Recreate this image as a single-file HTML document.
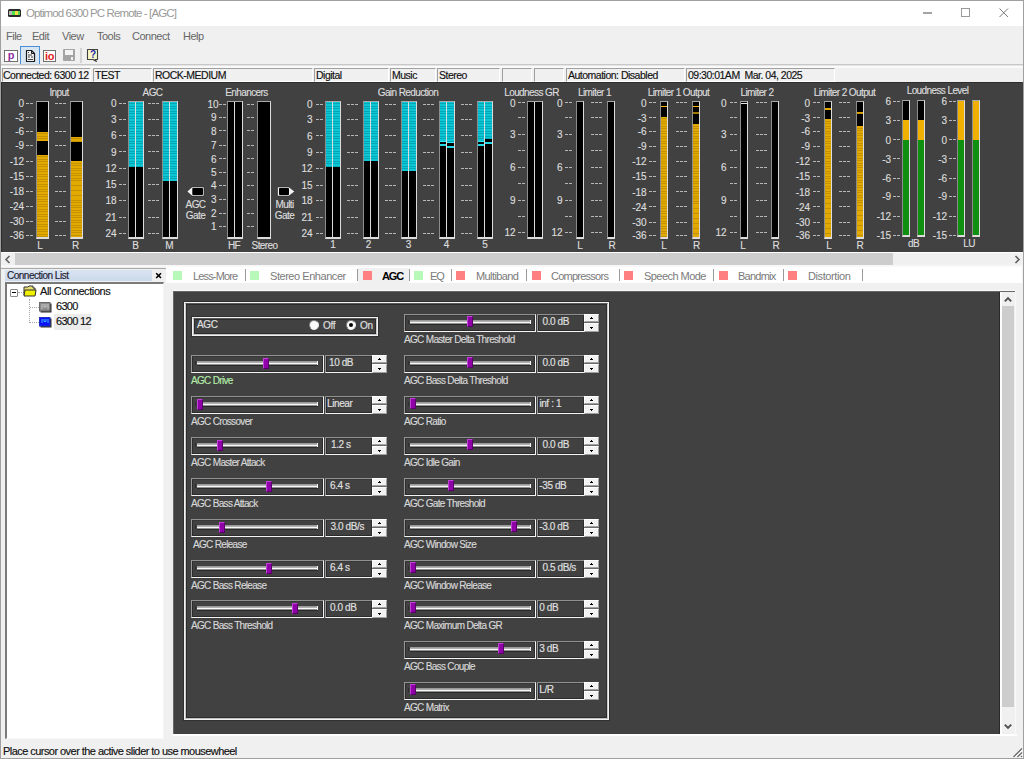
<!DOCTYPE html>
<html><head><meta charset="utf-8"><title>Optimod 6300 PC Remote - [AGC]</title>
<style>
html,body{margin:0;padding:0;width:1024px;height:759px;overflow:hidden;background:#f0f0f0}
body{position:relative;font-family:"Liberation Sans",sans-serif}
body>div,body>svg{position:absolute}
.t{white-space:pre}
.s{-webkit-text-stroke:0.15px currentColor}
</style></head><body>
<div style="left:0px;top:0px;width:1024px;height:759px;background:#f0f0f0"></div>
<div style="left:0px;top:0px;width:1024px;height:26px;background:#ffffff"></div>
<div style="left:8px;top:9px;width:13px;height:8px;background:#2a2a2a;border-radius:1.5px"></div>
<div style="left:9px;top:11px;width:3px;height:4px;background:#b8b8b8"></div>
<div style="left:12px;top:11px;width:3px;height:4px;background:#50e050"></div>
<div style="left:15px;top:11px;width:3px;height:4px;background:#f0e040"></div>
<div style="left:18px;top:11px;width:2px;height:4px;background:#50d050"></div>
<div class="t" style="left:26px;top:6.0px;height:14px;line-height:14px;font-size:11.5px;color:#999999;letter-spacing:-0.88px;font-weight:normal;">Optimod 6300 PC Remote - [AGC]</div>
<div style="left:923px;top:12px;width:9px;height:2px;background:#a4a4a4"></div>
<div style="left:961px;top:8px;width:9px;height:9px;border:1px solid #9a9a9a;box-sizing:border-box"></div>
<svg style="position:absolute;left:999px;top:8px" width="10" height="10"><path d="M0.5 0.5 L9 9 M9 0.5 L0.5 9" stroke="#7a7a7a" stroke-width="1"/></svg>
<div class="t" style="left:6px;top:29.0px;height:14px;line-height:14px;font-size:11px;color:#666666;letter-spacing:-0.5px;font-weight:normal;">File</div>
<div class="t" style="left:32px;top:29.0px;height:14px;line-height:14px;font-size:11px;color:#666666;letter-spacing:-0.5px;font-weight:normal;">Edit</div>
<div class="t" style="left:62px;top:29.0px;height:14px;line-height:14px;font-size:11px;color:#666666;letter-spacing:-0.5px;font-weight:normal;">View</div>
<div class="t" style="left:97px;top:29.0px;height:14px;line-height:14px;font-size:11px;color:#666666;letter-spacing:-0.5px;font-weight:normal;">Tools</div>
<div class="t" style="left:132px;top:29.0px;height:14px;line-height:14px;font-size:11px;color:#666666;letter-spacing:-0.5px;font-weight:normal;">Connect</div>
<div class="t" style="left:183px;top:29.0px;height:14px;line-height:14px;font-size:11px;color:#666666;letter-spacing:-0.5px;font-weight:normal;">Help</div>
<div style="left:4px;top:50px;width:14px;height:12px;background:#fff;border:1px solid #707070;box-sizing:border-box"></div>
<div class="t" style="left:-139px;width:300px;text-align:center;top:47.5px;height:14px;line-height:14px;font-size:11px;color:#9030a0;letter-spacing:0px;font-weight:bold;">p</div>
<div style="left:20px;top:46px;width:20px;height:19px;background:#d8e6f2;border:1px solid #4a90d8;box-sizing:border-box"></div>
<svg style="position:absolute;left:25px;top:49px" width="11" height="14"><path d="M1.5 1.5 H6.5 L9.5 4.5 V12.5 H1.5 Z" fill="#f4f4f4" stroke="#1a1a1a" stroke-width="1.2" stroke-linejoin="round"/><path d="M6.5 1.5 V4.5 H9.5" fill="none" stroke="#1a1a1a" stroke-width="1"/><path d="M3 3.5 H4 M3 6 H7 M3 8 H5 M6 8 H8 M3 10.5 H8" stroke="#303030" stroke-width="0.9"/></svg>
<div style="left:43px;top:50px;width:13px;height:12px;background:#fff;border:1px solid #707070;box-sizing:border-box"></div>
<div class="t" style="left:-100.5px;width:300px;text-align:center;top:49.0px;height:14px;line-height:14px;font-size:11px;color:#e02020;letter-spacing:-0.5px;font-weight:bold;">io</div>
<div style="left:63px;top:49px;width:12px;height:12px;background:#a4a4a4;border-radius:1px"></div>
<div style="left:65px;top:50px;width:8px;height:5px;background:#f4f4f4"></div>
<div style="left:71px;top:57px;width:2px;height:3px;background:#f0f0f0"></div>
<div style="left:80px;top:48px;width:2px;height:15px;background:#d4d4d4"></div>
<svg style="position:absolute;left:86px;top:48px" width="14" height="15"><path d="M1.5 1.5 H11.5 V11.5 H9 L10.5 13.5 L7 11.5 H1.5 Z" fill="#f8f8c8" stroke="#404040" stroke-width="1.1" stroke-linejoin="round"/></svg>
<div class="t" style="left:-57px;width:300px;text-align:center;top:48.0px;height:14px;line-height:14px;font-size:10px;color:#2828b0;letter-spacing:0px;font-weight:bold;">?</div>
<div style="left:1px;top:64px;width:1022px;height:1px;background:#c8c8c8"></div>
<div style="left:1px;top:65px;width:1022px;height:1px;background:#e4e4e4"></div>
<div style="left:1px;top:66px;width:1022px;height:2px;background:#fafafa"></div>
<div style="left:2px;top:68px;width:89px;height:14px;border-left:1px solid #a0a0a0;border-top:1px solid #a0a0a0;border-right:1px solid #ffffff;border-bottom:1px solid #ffffff;box-sizing:border-box"></div>
<div class="t s" style="left:3px;top:68.0px;height:14px;line-height:14px;font-size:10.5px;color:#101010;letter-spacing:-0.5px;font-weight:normal;">Connected: 6300 12</div>
<div style="left:93px;top:68px;width:59px;height:14px;border-left:1px solid #a0a0a0;border-top:1px solid #a0a0a0;border-right:1px solid #ffffff;border-bottom:1px solid #ffffff;box-sizing:border-box"></div>
<div class="t s" style="left:95px;top:68.0px;height:14px;line-height:14px;font-size:10.5px;color:#101010;letter-spacing:-0.5px;font-weight:normal;">TEST</div>
<div style="left:153px;top:68px;width:160px;height:14px;border-left:1px solid #a0a0a0;border-top:1px solid #a0a0a0;border-right:1px solid #ffffff;border-bottom:1px solid #ffffff;box-sizing:border-box"></div>
<div class="t s" style="left:155px;top:68.0px;height:14px;line-height:14px;font-size:10.5px;color:#101010;letter-spacing:-0.5px;font-weight:normal;">ROCK-MEDIUM</div>
<div style="left:314px;top:68px;width:75px;height:14px;border-left:1px solid #a0a0a0;border-top:1px solid #a0a0a0;border-right:1px solid #ffffff;border-bottom:1px solid #ffffff;box-sizing:border-box"></div>
<div class="t s" style="left:316px;top:68.0px;height:14px;line-height:14px;font-size:10.5px;color:#101010;letter-spacing:-0.5px;font-weight:normal;">Digital</div>
<div style="left:390px;top:68px;width:46px;height:14px;border-left:1px solid #a0a0a0;border-top:1px solid #a0a0a0;border-right:1px solid #ffffff;border-bottom:1px solid #ffffff;box-sizing:border-box"></div>
<div class="t s" style="left:392px;top:68.0px;height:14px;line-height:14px;font-size:10.5px;color:#101010;letter-spacing:-0.5px;font-weight:normal;">Music</div>
<div style="left:437px;top:68px;width:63px;height:14px;border-left:1px solid #a0a0a0;border-top:1px solid #a0a0a0;border-right:1px solid #ffffff;border-bottom:1px solid #ffffff;box-sizing:border-box"></div>
<div class="t s" style="left:439px;top:68.0px;height:14px;line-height:14px;font-size:10.5px;color:#101010;letter-spacing:-0.5px;font-weight:normal;">Stereo</div>
<div style="left:502px;top:68px;width:30px;height:14px;border-left:1px solid #a0a0a0;border-top:1px solid #a0a0a0;border-right:1px solid #ffffff;border-bottom:1px solid #ffffff;box-sizing:border-box"></div>
<div style="left:534px;top:68px;width:30px;height:14px;border-left:1px solid #a0a0a0;border-top:1px solid #a0a0a0;border-right:1px solid #ffffff;border-bottom:1px solid #ffffff;box-sizing:border-box"></div>
<div style="left:566px;top:68px;width:119px;height:14px;border-left:1px solid #a0a0a0;border-top:1px solid #a0a0a0;border-right:1px solid #ffffff;border-bottom:1px solid #ffffff;box-sizing:border-box"></div>
<div class="t s" style="left:568px;top:68.0px;height:14px;line-height:14px;font-size:10.5px;color:#101010;letter-spacing:-0.5px;font-weight:normal;">Automation: Disabled</div>
<div style="left:686px;top:68px;width:149px;height:14px;border-left:1px solid #a0a0a0;border-top:1px solid #a0a0a0;border-right:1px solid #ffffff;border-bottom:1px solid #ffffff;box-sizing:border-box"></div>
<div class="t s" style="left:688px;top:68.0px;height:14px;line-height:14px;font-size:10.5px;color:#101010;letter-spacing:-0.5px;font-weight:normal;">09:30:01AM  Mar. 04, 2025</div>
<div style="left:1px;top:82px;width:1022px;height:170px;background:#414141"></div>
<div style="left:1px;top:252px;width:1022px;height:1px;background:#ffffff"></div>
<div style="left:1px;top:82px;width:1021px;height:1px;background:#2e2e2e"></div>
<div style="left:1px;top:82px;width:1px;height:170px;background:#2e2e2e"></div>
<div class="t s" style="left:-91px;width:300px;text-align:center;top:85.5px;height:14px;line-height:14px;font-size:10px;color:#dcdcdc;letter-spacing:-0.6px;font-weight:normal;">Input</div>
<div class="t s" style="left:-276px;width:300px;text-align:right;top:96.7px;height:14px;line-height:14px;font-size:10px;color:#dcdcdc;letter-spacing:-0.1px;font-weight:normal;">0</div>
<div style="left:26px;top:103px;width:3px;height:1px;background:#b4b8bc"></div>
<div style="left:30px;top:103px;width:3px;height:1px;background:#b4b8bc"></div>
<div class="t s" style="left:-276px;width:300px;text-align:right;top:110.7px;height:14px;line-height:14px;font-size:10px;color:#dcdcdc;letter-spacing:-0.1px;font-weight:normal;">-3</div>
<div style="left:26px;top:117px;width:3px;height:1px;background:#b4b8bc"></div>
<div style="left:30px;top:117px;width:3px;height:1px;background:#b4b8bc"></div>
<div class="t s" style="left:-276px;width:300px;text-align:right;top:125.19999999999999px;height:14px;line-height:14px;font-size:10px;color:#dcdcdc;letter-spacing:-0.1px;font-weight:normal;">-6</div>
<div style="left:26px;top:131px;width:3px;height:1px;background:#b4b8bc"></div>
<div style="left:30px;top:131px;width:3px;height:1px;background:#b4b8bc"></div>
<div class="t s" style="left:-276px;width:300px;text-align:right;top:138.7px;height:14px;line-height:14px;font-size:10px;color:#dcdcdc;letter-spacing:-0.1px;font-weight:normal;">-9</div>
<div style="left:26px;top:145px;width:3px;height:1px;background:#b4b8bc"></div>
<div style="left:30px;top:145px;width:3px;height:1px;background:#b4b8bc"></div>
<div class="t s" style="left:-276px;width:300px;text-align:right;top:154.7px;height:14px;line-height:14px;font-size:10px;color:#dcdcdc;letter-spacing:-0.1px;font-weight:normal;">-12</div>
<div style="left:26px;top:161px;width:3px;height:1px;background:#b4b8bc"></div>
<div style="left:30px;top:161px;width:3px;height:1px;background:#b4b8bc"></div>
<div class="t s" style="left:-276px;width:300px;text-align:right;top:169.7px;height:14px;line-height:14px;font-size:10px;color:#dcdcdc;letter-spacing:-0.1px;font-weight:normal;">-15</div>
<div style="left:26px;top:176px;width:3px;height:1px;background:#b4b8bc"></div>
<div style="left:30px;top:176px;width:3px;height:1px;background:#b4b8bc"></div>
<div class="t s" style="left:-276px;width:300px;text-align:right;top:185.2px;height:14px;line-height:14px;font-size:10px;color:#dcdcdc;letter-spacing:-0.1px;font-weight:normal;">-18</div>
<div style="left:26px;top:191px;width:3px;height:1px;background:#b4b8bc"></div>
<div style="left:30px;top:191px;width:3px;height:1px;background:#b4b8bc"></div>
<div class="t s" style="left:-276px;width:300px;text-align:right;top:200.2px;height:14px;line-height:14px;font-size:10px;color:#dcdcdc;letter-spacing:-0.1px;font-weight:normal;">-24</div>
<div style="left:26px;top:206px;width:3px;height:1px;background:#b4b8bc"></div>
<div style="left:30px;top:206px;width:3px;height:1px;background:#b4b8bc"></div>
<div class="t s" style="left:-276px;width:300px;text-align:right;top:215.2px;height:14px;line-height:14px;font-size:10px;color:#dcdcdc;letter-spacing:-0.1px;font-weight:normal;">-30</div>
<div style="left:26px;top:221px;width:3px;height:1px;background:#b4b8bc"></div>
<div style="left:30px;top:221px;width:3px;height:1px;background:#b4b8bc"></div>
<div class="t s" style="left:-276px;width:300px;text-align:right;top:229.2px;height:14px;line-height:14px;font-size:10px;color:#dcdcdc;letter-spacing:-0.1px;font-weight:normal;">-36</div>
<div style="left:26px;top:235px;width:3px;height:1px;background:#b4b8bc"></div>
<div style="left:30px;top:235px;width:3px;height:1px;background:#b4b8bc"></div>
<div style="left:55px;top:103px;width:3px;height:1px;background:#b4b8bc"></div>
<div style="left:59px;top:103px;width:3px;height:1px;background:#b4b8bc"></div>
<div style="left:63px;top:103px;width:3px;height:1px;background:#b4b8bc"></div>
<div style="left:55px;top:117px;width:3px;height:1px;background:#b4b8bc"></div>
<div style="left:59px;top:117px;width:3px;height:1px;background:#b4b8bc"></div>
<div style="left:63px;top:117px;width:3px;height:1px;background:#b4b8bc"></div>
<div style="left:55px;top:131px;width:3px;height:1px;background:#b4b8bc"></div>
<div style="left:59px;top:131px;width:3px;height:1px;background:#b4b8bc"></div>
<div style="left:63px;top:131px;width:3px;height:1px;background:#b4b8bc"></div>
<div style="left:55px;top:145px;width:3px;height:1px;background:#b4b8bc"></div>
<div style="left:59px;top:145px;width:3px;height:1px;background:#b4b8bc"></div>
<div style="left:63px;top:145px;width:3px;height:1px;background:#b4b8bc"></div>
<div style="left:55px;top:161px;width:3px;height:1px;background:#b4b8bc"></div>
<div style="left:59px;top:161px;width:3px;height:1px;background:#b4b8bc"></div>
<div style="left:63px;top:161px;width:3px;height:1px;background:#b4b8bc"></div>
<div style="left:55px;top:176px;width:3px;height:1px;background:#b4b8bc"></div>
<div style="left:59px;top:176px;width:3px;height:1px;background:#b4b8bc"></div>
<div style="left:63px;top:176px;width:3px;height:1px;background:#b4b8bc"></div>
<div style="left:55px;top:191px;width:3px;height:1px;background:#b4b8bc"></div>
<div style="left:59px;top:191px;width:3px;height:1px;background:#b4b8bc"></div>
<div style="left:63px;top:191px;width:3px;height:1px;background:#b4b8bc"></div>
<div style="left:55px;top:206px;width:3px;height:1px;background:#b4b8bc"></div>
<div style="left:59px;top:206px;width:3px;height:1px;background:#b4b8bc"></div>
<div style="left:63px;top:206px;width:3px;height:1px;background:#b4b8bc"></div>
<div style="left:55px;top:221px;width:3px;height:1px;background:#b4b8bc"></div>
<div style="left:59px;top:221px;width:3px;height:1px;background:#b4b8bc"></div>
<div style="left:63px;top:221px;width:3px;height:1px;background:#b4b8bc"></div>
<div style="left:55px;top:235px;width:3px;height:1px;background:#b4b8bc"></div>
<div style="left:59px;top:235px;width:3px;height:1px;background:#b4b8bc"></div>
<div style="left:63px;top:235px;width:3px;height:1px;background:#b4b8bc"></div>
<div style="left:36px;top:101px;width:13px;height:138px;background:#000;border-left:1px solid #8c8c8c;border-top:1px solid #a8a8a8;border-right:1px solid #dcdcdc;border-bottom:2px solid #dcdcdc;box-sizing:border-box"></div>
<div style="left:37px;top:132px;width:11px;height:9px;background:repeating-linear-gradient(#e2aa00 0 1.5px,#c49200 1.5px 2.5px)"></div>
<div style="left:37px;top:155px;width:11px;height:82px;background:repeating-linear-gradient(#e2aa00 0 1.5px,#c49200 1.5px 2.5px)"></div>
<div style="left:70px;top:101px;width:13px;height:138px;background:#000;border-left:1px solid #8c8c8c;border-top:1px solid #a8a8a8;border-right:1px solid #dcdcdc;border-bottom:2px solid #dcdcdc;box-sizing:border-box"></div>
<div style="left:71px;top:137px;width:11px;height:5px;background:repeating-linear-gradient(#e2aa00 0 1.5px,#c49200 1.5px 2.5px)"></div>
<div style="left:71px;top:161px;width:11px;height:76px;background:repeating-linear-gradient(#e2aa00 0 1.5px,#c49200 1.5px 2.5px)"></div>
<div class="t s" style="left:-110px;width:300px;text-align:center;top:239.0px;height:14px;line-height:14px;font-size:10px;color:#dcdcdc;letter-spacing:0px;font-weight:normal;">L</div>
<div class="t s" style="left:-74.5px;width:300px;text-align:center;top:239.0px;height:14px;line-height:14px;font-size:10px;color:#dcdcdc;letter-spacing:0px;font-weight:normal;">R</div>
<div class="t s" style="left:2.5px;width:300px;text-align:center;top:85.5px;height:14px;line-height:14px;font-size:10px;color:#dcdcdc;letter-spacing:-0.6px;font-weight:normal;">AGC</div>
<div class="t s" style="left:-183.5px;width:300px;text-align:right;top:97.0px;height:14px;line-height:14px;font-size:10px;color:#dcdcdc;letter-spacing:-0.1px;font-weight:normal;">0</div>
<div style="left:119px;top:103px;width:3px;height:1px;background:#b4b8bc"></div>
<div style="left:123px;top:103px;width:3px;height:1px;background:#b4b8bc"></div>
<div class="t s" style="left:-183.5px;width:300px;text-align:right;top:113.10000000000001px;height:14px;line-height:14px;font-size:10px;color:#dcdcdc;letter-spacing:-0.1px;font-weight:normal;">3</div>
<div style="left:119px;top:119px;width:3px;height:1px;background:#b4b8bc"></div>
<div style="left:123px;top:119px;width:3px;height:1px;background:#b4b8bc"></div>
<div class="t s" style="left:-183.5px;width:300px;text-align:right;top:129.0px;height:14px;line-height:14px;font-size:10px;color:#dcdcdc;letter-spacing:-0.1px;font-weight:normal;">6</div>
<div style="left:119px;top:135px;width:3px;height:1px;background:#b4b8bc"></div>
<div style="left:123px;top:135px;width:3px;height:1px;background:#b4b8bc"></div>
<div class="t s" style="left:-183.5px;width:300px;text-align:right;top:145.6px;height:14px;line-height:14px;font-size:10px;color:#dcdcdc;letter-spacing:-0.1px;font-weight:normal;">9</div>
<div style="left:119px;top:151px;width:3px;height:1px;background:#b4b8bc"></div>
<div style="left:123px;top:151px;width:3px;height:1px;background:#b4b8bc"></div>
<div class="t s" style="left:-183.5px;width:300px;text-align:right;top:161.89999999999998px;height:14px;line-height:14px;font-size:10px;color:#dcdcdc;letter-spacing:-0.1px;font-weight:normal;">12</div>
<div style="left:119px;top:168px;width:3px;height:1px;background:#b4b8bc"></div>
<div style="left:123px;top:168px;width:3px;height:1px;background:#b4b8bc"></div>
<div class="t s" style="left:-183.5px;width:300px;text-align:right;top:178.29999999999998px;height:14px;line-height:14px;font-size:10px;color:#dcdcdc;letter-spacing:-0.1px;font-weight:normal;">15</div>
<div style="left:119px;top:184px;width:3px;height:1px;background:#b4b8bc"></div>
<div style="left:123px;top:184px;width:3px;height:1px;background:#b4b8bc"></div>
<div class="t s" style="left:-183.5px;width:300px;text-align:right;top:194.39999999999998px;height:14px;line-height:14px;font-size:10px;color:#dcdcdc;letter-spacing:-0.1px;font-weight:normal;">18</div>
<div style="left:119px;top:200px;width:3px;height:1px;background:#b4b8bc"></div>
<div style="left:123px;top:200px;width:3px;height:1px;background:#b4b8bc"></div>
<div class="t s" style="left:-183.5px;width:300px;text-align:right;top:211.2px;height:14px;line-height:14px;font-size:10px;color:#dcdcdc;letter-spacing:-0.1px;font-weight:normal;">21</div>
<div style="left:119px;top:217px;width:3px;height:1px;background:#b4b8bc"></div>
<div style="left:123px;top:217px;width:3px;height:1px;background:#b4b8bc"></div>
<div class="t s" style="left:-183.5px;width:300px;text-align:right;top:227.29999999999998px;height:14px;line-height:14px;font-size:10px;color:#dcdcdc;letter-spacing:-0.1px;font-weight:normal;">24</div>
<div style="left:119px;top:233px;width:3px;height:1px;background:#b4b8bc"></div>
<div style="left:123px;top:233px;width:3px;height:1px;background:#b4b8bc"></div>
<div style="left:148px;top:103px;width:3px;height:1px;background:#b4b8bc"></div>
<div style="left:152px;top:103px;width:3px;height:1px;background:#b4b8bc"></div>
<div style="left:156px;top:103px;width:3px;height:1px;background:#b4b8bc"></div>
<div style="left:148px;top:119px;width:3px;height:1px;background:#b4b8bc"></div>
<div style="left:152px;top:119px;width:3px;height:1px;background:#b4b8bc"></div>
<div style="left:156px;top:119px;width:3px;height:1px;background:#b4b8bc"></div>
<div style="left:148px;top:135px;width:3px;height:1px;background:#b4b8bc"></div>
<div style="left:152px;top:135px;width:3px;height:1px;background:#b4b8bc"></div>
<div style="left:156px;top:135px;width:3px;height:1px;background:#b4b8bc"></div>
<div style="left:148px;top:151px;width:3px;height:1px;background:#b4b8bc"></div>
<div style="left:152px;top:151px;width:3px;height:1px;background:#b4b8bc"></div>
<div style="left:156px;top:151px;width:3px;height:1px;background:#b4b8bc"></div>
<div style="left:148px;top:168px;width:3px;height:1px;background:#b4b8bc"></div>
<div style="left:152px;top:168px;width:3px;height:1px;background:#b4b8bc"></div>
<div style="left:156px;top:168px;width:3px;height:1px;background:#b4b8bc"></div>
<div style="left:148px;top:184px;width:3px;height:1px;background:#b4b8bc"></div>
<div style="left:152px;top:184px;width:3px;height:1px;background:#b4b8bc"></div>
<div style="left:156px;top:184px;width:3px;height:1px;background:#b4b8bc"></div>
<div style="left:148px;top:200px;width:3px;height:1px;background:#b4b8bc"></div>
<div style="left:152px;top:200px;width:3px;height:1px;background:#b4b8bc"></div>
<div style="left:156px;top:200px;width:3px;height:1px;background:#b4b8bc"></div>
<div style="left:148px;top:217px;width:3px;height:1px;background:#b4b8bc"></div>
<div style="left:152px;top:217px;width:3px;height:1px;background:#b4b8bc"></div>
<div style="left:156px;top:217px;width:3px;height:1px;background:#b4b8bc"></div>
<div style="left:148px;top:233px;width:3px;height:1px;background:#b4b8bc"></div>
<div style="left:152px;top:233px;width:3px;height:1px;background:#b4b8bc"></div>
<div style="left:156px;top:233px;width:3px;height:1px;background:#b4b8bc"></div>
<div style="left:128px;top:101px;width:16px;height:138px;background:#000;border-left:1px solid #8c8c8c;border-top:1px solid #a8a8a8;border-right:1px solid #dcdcdc;border-bottom:2px solid #dcdcdc;box-sizing:border-box"></div>
<div style="left:135px;top:102px;width:1px;height:135px;background:#dcdcdc"></div>
<div style="left:129px;top:102px;width:6px;height:65px;background:repeating-linear-gradient(#0cc8d6 0 1.5px,#02a6b4 1.5px 2.5px)"></div>
<div style="left:136px;top:102px;width:7px;height:65px;background:repeating-linear-gradient(#0cc8d6 0 1.5px,#02a6b4 1.5px 2.5px)"></div>
<div style="left:162px;top:101px;width:16px;height:138px;background:#000;border-left:1px solid #8c8c8c;border-top:1px solid #a8a8a8;border-right:1px solid #dcdcdc;border-bottom:2px solid #dcdcdc;box-sizing:border-box"></div>
<div style="left:169px;top:102px;width:1px;height:135px;background:#dcdcdc"></div>
<div style="left:163px;top:102px;width:6px;height:79px;background:repeating-linear-gradient(#0cc8d6 0 1.5px,#02a6b4 1.5px 2.5px)"></div>
<div style="left:170px;top:102px;width:7px;height:79px;background:repeating-linear-gradient(#0cc8d6 0 1.5px,#02a6b4 1.5px 2.5px)"></div>
<div class="t s" style="left:-14.5px;width:300px;text-align:center;top:239.0px;height:14px;line-height:14px;font-size:10px;color:#dcdcdc;letter-spacing:0px;font-weight:normal;">B</div>
<div class="t s" style="left:19.5px;width:300px;text-align:center;top:239.0px;height:14px;line-height:14px;font-size:10px;color:#dcdcdc;letter-spacing:0px;font-weight:normal;">M</div>
<svg style="position:absolute;left:186px;top:186px" width="20" height="12"><path d="M1 5.5 L6 1 H18 V10 H6 Z" fill="#f4f4f4" stroke="#2a2a2a" stroke-width="0.6"/><rect x="6.3" y="2" width="10.7" height="7" rx="0.8" fill="#000"/></svg>
<div class="t s" style="left:45.5px;width:300px;text-align:center;top:197.8px;height:14px;line-height:14px;font-size:10px;color:#dcdcdc;letter-spacing:-0.6px;font-weight:normal;">AGC</div>
<div class="t s" style="left:45.5px;width:300px;text-align:center;top:208.5px;height:14px;line-height:14px;font-size:10px;color:#dcdcdc;letter-spacing:-0.6px;font-weight:normal;">Gate</div>
<div class="t s" style="left:96.5px;width:300px;text-align:center;top:85.5px;height:14px;line-height:14px;font-size:10px;color:#dcdcdc;letter-spacing:-0.6px;font-weight:normal;">Enhancers</div>
<div style="left:219px;top:104px;width:3px;height:1px;background:#b4b8bc"></div>
<div style="left:223px;top:104px;width:3px;height:1px;background:#b4b8bc"></div>
<div class="t s" style="left:-83.5px;width:300px;text-align:right;top:111.10000000000001px;height:14px;line-height:14px;font-size:10px;color:#dcdcdc;letter-spacing:-0.1px;font-weight:normal;">9</div>
<div style="left:219px;top:117px;width:3px;height:1px;background:#b4b8bc"></div>
<div style="left:223px;top:117px;width:3px;height:1px;background:#b4b8bc"></div>
<div class="t s" style="left:-83.5px;width:300px;text-align:right;top:124.5px;height:14px;line-height:14px;font-size:10px;color:#dcdcdc;letter-spacing:-0.1px;font-weight:normal;">8</div>
<div style="left:219px;top:130px;width:3px;height:1px;background:#b4b8bc"></div>
<div style="left:223px;top:130px;width:3px;height:1px;background:#b4b8bc"></div>
<div class="t s" style="left:-83.5px;width:300px;text-align:right;top:138.89999999999998px;height:14px;line-height:14px;font-size:10px;color:#dcdcdc;letter-spacing:-0.1px;font-weight:normal;">7</div>
<div style="left:219px;top:145px;width:3px;height:1px;background:#b4b8bc"></div>
<div style="left:223px;top:145px;width:3px;height:1px;background:#b4b8bc"></div>
<div class="t s" style="left:-83.5px;width:300px;text-align:right;top:152.5px;height:14px;line-height:14px;font-size:10px;color:#dcdcdc;letter-spacing:-0.1px;font-weight:normal;">6</div>
<div style="left:219px;top:158px;width:3px;height:1px;background:#b4b8bc"></div>
<div style="left:223px;top:158px;width:3px;height:1px;background:#b4b8bc"></div>
<div class="t s" style="left:-83.5px;width:300px;text-align:right;top:166.0px;height:14px;line-height:14px;font-size:10px;color:#dcdcdc;letter-spacing:-0.1px;font-weight:normal;">5</div>
<div style="left:219px;top:172px;width:3px;height:1px;background:#b4b8bc"></div>
<div style="left:223px;top:172px;width:3px;height:1px;background:#b4b8bc"></div>
<div class="t s" style="left:-83.5px;width:300px;text-align:right;top:179.2px;height:14px;line-height:14px;font-size:10px;color:#dcdcdc;letter-spacing:-0.1px;font-weight:normal;">4</div>
<div style="left:219px;top:185px;width:3px;height:1px;background:#b4b8bc"></div>
<div style="left:223px;top:185px;width:3px;height:1px;background:#b4b8bc"></div>
<div class="t s" style="left:-83.5px;width:300px;text-align:right;top:193.29999999999998px;height:14px;line-height:14px;font-size:10px;color:#dcdcdc;letter-spacing:-0.1px;font-weight:normal;">3</div>
<div style="left:219px;top:199px;width:3px;height:1px;background:#b4b8bc"></div>
<div style="left:223px;top:199px;width:3px;height:1px;background:#b4b8bc"></div>
<div class="t s" style="left:-83.5px;width:300px;text-align:right;top:206.7px;height:14px;line-height:14px;font-size:10px;color:#dcdcdc;letter-spacing:-0.1px;font-weight:normal;">2</div>
<div style="left:219px;top:213px;width:3px;height:1px;background:#b4b8bc"></div>
<div style="left:223px;top:213px;width:3px;height:1px;background:#b4b8bc"></div>
<div class="t s" style="left:-83.5px;width:300px;text-align:right;top:220.2px;height:14px;line-height:14px;font-size:10px;color:#dcdcdc;letter-spacing:-0.1px;font-weight:normal;">1</div>
<div style="left:219px;top:226px;width:3px;height:1px;background:#b4b8bc"></div>
<div style="left:223px;top:226px;width:3px;height:1px;background:#b4b8bc"></div>
<div class="t s" style="left:-81.5px;width:300px;text-align:right;top:98.10000000000001px;height:14px;line-height:14px;font-size:10px;color:#dcdcdc;letter-spacing:-0.1px;font-weight:normal;">10</div>
<div style="left:247px;top:104px;width:3px;height:1px;background:#b4b8bc"></div>
<div style="left:251px;top:104px;width:3px;height:1px;background:#b4b8bc"></div>
<div style="left:247px;top:117px;width:3px;height:1px;background:#b4b8bc"></div>
<div style="left:251px;top:117px;width:3px;height:1px;background:#b4b8bc"></div>
<div style="left:247px;top:130px;width:3px;height:1px;background:#b4b8bc"></div>
<div style="left:251px;top:130px;width:3px;height:1px;background:#b4b8bc"></div>
<div style="left:247px;top:145px;width:3px;height:1px;background:#b4b8bc"></div>
<div style="left:251px;top:145px;width:3px;height:1px;background:#b4b8bc"></div>
<div style="left:247px;top:158px;width:3px;height:1px;background:#b4b8bc"></div>
<div style="left:251px;top:158px;width:3px;height:1px;background:#b4b8bc"></div>
<div style="left:247px;top:172px;width:3px;height:1px;background:#b4b8bc"></div>
<div style="left:251px;top:172px;width:3px;height:1px;background:#b4b8bc"></div>
<div style="left:247px;top:185px;width:3px;height:1px;background:#b4b8bc"></div>
<div style="left:251px;top:185px;width:3px;height:1px;background:#b4b8bc"></div>
<div style="left:247px;top:199px;width:3px;height:1px;background:#b4b8bc"></div>
<div style="left:251px;top:199px;width:3px;height:1px;background:#b4b8bc"></div>
<div style="left:247px;top:213px;width:3px;height:1px;background:#b4b8bc"></div>
<div style="left:251px;top:213px;width:3px;height:1px;background:#b4b8bc"></div>
<div style="left:247px;top:226px;width:3px;height:1px;background:#b4b8bc"></div>
<div style="left:251px;top:226px;width:3px;height:1px;background:#b4b8bc"></div>
<div style="left:227px;top:101px;width:16px;height:138px;background:#000;border-left:1px solid #8c8c8c;border-top:1px solid #a8a8a8;border-right:1px solid #dcdcdc;border-bottom:2px solid #dcdcdc;box-sizing:border-box"></div>
<div style="left:234px;top:102px;width:1px;height:135px;background:#dcdcdc"></div>
<div style="left:257px;top:101px;width:14px;height:138px;background:#000;border-left:1px solid #8c8c8c;border-top:1px solid #a8a8a8;border-right:1px solid #dcdcdc;border-bottom:2px solid #dcdcdc;box-sizing:border-box"></div>
<div class="t s" style="left:84px;width:300px;text-align:center;top:239.0px;height:14px;line-height:14px;font-size:10px;color:#dcdcdc;letter-spacing:-0.6px;font-weight:normal;">HF</div>
<div class="t s" style="left:114.5px;width:300px;text-align:center;top:239.0px;height:14px;line-height:14px;font-size:10px;color:#dcdcdc;letter-spacing:-0.6px;font-weight:normal;">Stereo</div>
<svg style="position:absolute;left:276px;top:186px" width="20" height="12"><path d="M1.5 1 H13 L18.7 5.5 L13 10 H1.5 Z" fill="#f4f4f4" stroke="#2a2a2a" stroke-width="0.6"/><rect x="3" y="2" width="10" height="7" rx="0.8" fill="#000"/></svg>
<div class="t s" style="left:134.5px;width:300px;text-align:center;top:197.8px;height:14px;line-height:14px;font-size:10px;color:#dcdcdc;letter-spacing:-0.6px;font-weight:normal;">Multi</div>
<div class="t s" style="left:134.5px;width:300px;text-align:center;top:208.5px;height:14px;line-height:14px;font-size:10px;color:#dcdcdc;letter-spacing:-0.6px;font-weight:normal;">Gate</div>
<div class="t s" style="left:258px;width:300px;text-align:center;top:85.5px;height:14px;line-height:14px;font-size:10px;color:#dcdcdc;letter-spacing:-0.6px;font-weight:normal;">Gain Reduction</div>
<div class="t s" style="left:12.5px;width:300px;text-align:right;top:98.10000000000001px;height:14px;line-height:14px;font-size:10px;color:#dcdcdc;letter-spacing:-0.1px;font-weight:normal;">0</div>
<div style="left:316px;top:104px;width:3px;height:1px;background:#b4b8bc"></div>
<div style="left:320px;top:104px;width:3px;height:1px;background:#b4b8bc"></div>
<div class="t s" style="left:12.5px;width:300px;text-align:right;top:113.10000000000001px;height:14px;line-height:14px;font-size:10px;color:#dcdcdc;letter-spacing:-0.1px;font-weight:normal;">3</div>
<div style="left:316px;top:119px;width:3px;height:1px;background:#b4b8bc"></div>
<div style="left:320px;top:119px;width:3px;height:1px;background:#b4b8bc"></div>
<div class="t s" style="left:12.5px;width:300px;text-align:right;top:129.5px;height:14px;line-height:14px;font-size:10px;color:#dcdcdc;letter-spacing:-0.1px;font-weight:normal;">6</div>
<div style="left:316px;top:135px;width:3px;height:1px;background:#b4b8bc"></div>
<div style="left:320px;top:135px;width:3px;height:1px;background:#b4b8bc"></div>
<div class="t s" style="left:12.5px;width:300px;text-align:right;top:145.79999999999998px;height:14px;line-height:14px;font-size:10px;color:#dcdcdc;letter-spacing:-0.1px;font-weight:normal;">9</div>
<div style="left:316px;top:152px;width:3px;height:1px;background:#b4b8bc"></div>
<div style="left:320px;top:152px;width:3px;height:1px;background:#b4b8bc"></div>
<div class="t s" style="left:12.5px;width:300px;text-align:right;top:161.89999999999998px;height:14px;line-height:14px;font-size:10px;color:#dcdcdc;letter-spacing:-0.1px;font-weight:normal;">12</div>
<div style="left:316px;top:168px;width:3px;height:1px;background:#b4b8bc"></div>
<div style="left:320px;top:168px;width:3px;height:1px;background:#b4b8bc"></div>
<div class="t s" style="left:12.5px;width:300px;text-align:right;top:178.7px;height:14px;line-height:14px;font-size:10px;color:#dcdcdc;letter-spacing:-0.1px;font-weight:normal;">15</div>
<div style="left:316px;top:185px;width:3px;height:1px;background:#b4b8bc"></div>
<div style="left:320px;top:185px;width:3px;height:1px;background:#b4b8bc"></div>
<div class="t s" style="left:12.5px;width:300px;text-align:right;top:194.39999999999998px;height:14px;line-height:14px;font-size:10px;color:#dcdcdc;letter-spacing:-0.1px;font-weight:normal;">18</div>
<div style="left:316px;top:200px;width:3px;height:1px;background:#b4b8bc"></div>
<div style="left:320px;top:200px;width:3px;height:1px;background:#b4b8bc"></div>
<div class="t s" style="left:12.5px;width:300px;text-align:right;top:211.2px;height:14px;line-height:14px;font-size:10px;color:#dcdcdc;letter-spacing:-0.1px;font-weight:normal;">21</div>
<div style="left:316px;top:217px;width:3px;height:1px;background:#b4b8bc"></div>
<div style="left:320px;top:217px;width:3px;height:1px;background:#b4b8bc"></div>
<div class="t s" style="left:12.5px;width:300px;text-align:right;top:227.39999999999998px;height:14px;line-height:14px;font-size:10px;color:#dcdcdc;letter-spacing:-0.1px;font-weight:normal;">24</div>
<div style="left:316px;top:233px;width:3px;height:1px;background:#b4b8bc"></div>
<div style="left:320px;top:233px;width:3px;height:1px;background:#b4b8bc"></div>
<div style="left:347px;top:104px;width:3px;height:1px;background:#b4b8bc"></div>
<div style="left:351px;top:104px;width:3px;height:1px;background:#b4b8bc"></div>
<div style="left:355px;top:104px;width:3px;height:1px;background:#b4b8bc"></div>
<div style="left:347px;top:119px;width:3px;height:1px;background:#b4b8bc"></div>
<div style="left:351px;top:119px;width:3px;height:1px;background:#b4b8bc"></div>
<div style="left:355px;top:119px;width:3px;height:1px;background:#b4b8bc"></div>
<div style="left:347px;top:135px;width:3px;height:1px;background:#b4b8bc"></div>
<div style="left:351px;top:135px;width:3px;height:1px;background:#b4b8bc"></div>
<div style="left:355px;top:135px;width:3px;height:1px;background:#b4b8bc"></div>
<div style="left:347px;top:152px;width:3px;height:1px;background:#b4b8bc"></div>
<div style="left:351px;top:152px;width:3px;height:1px;background:#b4b8bc"></div>
<div style="left:355px;top:152px;width:3px;height:1px;background:#b4b8bc"></div>
<div style="left:347px;top:168px;width:3px;height:1px;background:#b4b8bc"></div>
<div style="left:351px;top:168px;width:3px;height:1px;background:#b4b8bc"></div>
<div style="left:355px;top:168px;width:3px;height:1px;background:#b4b8bc"></div>
<div style="left:347px;top:185px;width:3px;height:1px;background:#b4b8bc"></div>
<div style="left:351px;top:185px;width:3px;height:1px;background:#b4b8bc"></div>
<div style="left:355px;top:185px;width:3px;height:1px;background:#b4b8bc"></div>
<div style="left:347px;top:200px;width:3px;height:1px;background:#b4b8bc"></div>
<div style="left:351px;top:200px;width:3px;height:1px;background:#b4b8bc"></div>
<div style="left:355px;top:200px;width:3px;height:1px;background:#b4b8bc"></div>
<div style="left:347px;top:217px;width:3px;height:1px;background:#b4b8bc"></div>
<div style="left:351px;top:217px;width:3px;height:1px;background:#b4b8bc"></div>
<div style="left:355px;top:217px;width:3px;height:1px;background:#b4b8bc"></div>
<div style="left:347px;top:233px;width:3px;height:1px;background:#b4b8bc"></div>
<div style="left:351px;top:233px;width:3px;height:1px;background:#b4b8bc"></div>
<div style="left:355px;top:233px;width:3px;height:1px;background:#b4b8bc"></div>
<div style="left:385px;top:104px;width:3px;height:1px;background:#b4b8bc"></div>
<div style="left:389px;top:104px;width:3px;height:1px;background:#b4b8bc"></div>
<div style="left:393px;top:104px;width:3px;height:1px;background:#b4b8bc"></div>
<div style="left:385px;top:119px;width:3px;height:1px;background:#b4b8bc"></div>
<div style="left:389px;top:119px;width:3px;height:1px;background:#b4b8bc"></div>
<div style="left:393px;top:119px;width:3px;height:1px;background:#b4b8bc"></div>
<div style="left:385px;top:135px;width:3px;height:1px;background:#b4b8bc"></div>
<div style="left:389px;top:135px;width:3px;height:1px;background:#b4b8bc"></div>
<div style="left:393px;top:135px;width:3px;height:1px;background:#b4b8bc"></div>
<div style="left:385px;top:152px;width:3px;height:1px;background:#b4b8bc"></div>
<div style="left:389px;top:152px;width:3px;height:1px;background:#b4b8bc"></div>
<div style="left:393px;top:152px;width:3px;height:1px;background:#b4b8bc"></div>
<div style="left:385px;top:168px;width:3px;height:1px;background:#b4b8bc"></div>
<div style="left:389px;top:168px;width:3px;height:1px;background:#b4b8bc"></div>
<div style="left:393px;top:168px;width:3px;height:1px;background:#b4b8bc"></div>
<div style="left:385px;top:185px;width:3px;height:1px;background:#b4b8bc"></div>
<div style="left:389px;top:185px;width:3px;height:1px;background:#b4b8bc"></div>
<div style="left:393px;top:185px;width:3px;height:1px;background:#b4b8bc"></div>
<div style="left:385px;top:200px;width:3px;height:1px;background:#b4b8bc"></div>
<div style="left:389px;top:200px;width:3px;height:1px;background:#b4b8bc"></div>
<div style="left:393px;top:200px;width:3px;height:1px;background:#b4b8bc"></div>
<div style="left:385px;top:217px;width:3px;height:1px;background:#b4b8bc"></div>
<div style="left:389px;top:217px;width:3px;height:1px;background:#b4b8bc"></div>
<div style="left:393px;top:217px;width:3px;height:1px;background:#b4b8bc"></div>
<div style="left:385px;top:233px;width:3px;height:1px;background:#b4b8bc"></div>
<div style="left:389px;top:233px;width:3px;height:1px;background:#b4b8bc"></div>
<div style="left:393px;top:233px;width:3px;height:1px;background:#b4b8bc"></div>
<div style="left:423px;top:104px;width:3px;height:1px;background:#b4b8bc"></div>
<div style="left:427px;top:104px;width:3px;height:1px;background:#b4b8bc"></div>
<div style="left:431px;top:104px;width:3px;height:1px;background:#b4b8bc"></div>
<div style="left:423px;top:119px;width:3px;height:1px;background:#b4b8bc"></div>
<div style="left:427px;top:119px;width:3px;height:1px;background:#b4b8bc"></div>
<div style="left:431px;top:119px;width:3px;height:1px;background:#b4b8bc"></div>
<div style="left:423px;top:135px;width:3px;height:1px;background:#b4b8bc"></div>
<div style="left:427px;top:135px;width:3px;height:1px;background:#b4b8bc"></div>
<div style="left:431px;top:135px;width:3px;height:1px;background:#b4b8bc"></div>
<div style="left:423px;top:152px;width:3px;height:1px;background:#b4b8bc"></div>
<div style="left:427px;top:152px;width:3px;height:1px;background:#b4b8bc"></div>
<div style="left:431px;top:152px;width:3px;height:1px;background:#b4b8bc"></div>
<div style="left:423px;top:168px;width:3px;height:1px;background:#b4b8bc"></div>
<div style="left:427px;top:168px;width:3px;height:1px;background:#b4b8bc"></div>
<div style="left:431px;top:168px;width:3px;height:1px;background:#b4b8bc"></div>
<div style="left:423px;top:185px;width:3px;height:1px;background:#b4b8bc"></div>
<div style="left:427px;top:185px;width:3px;height:1px;background:#b4b8bc"></div>
<div style="left:431px;top:185px;width:3px;height:1px;background:#b4b8bc"></div>
<div style="left:423px;top:200px;width:3px;height:1px;background:#b4b8bc"></div>
<div style="left:427px;top:200px;width:3px;height:1px;background:#b4b8bc"></div>
<div style="left:431px;top:200px;width:3px;height:1px;background:#b4b8bc"></div>
<div style="left:423px;top:217px;width:3px;height:1px;background:#b4b8bc"></div>
<div style="left:427px;top:217px;width:3px;height:1px;background:#b4b8bc"></div>
<div style="left:431px;top:217px;width:3px;height:1px;background:#b4b8bc"></div>
<div style="left:423px;top:233px;width:3px;height:1px;background:#b4b8bc"></div>
<div style="left:427px;top:233px;width:3px;height:1px;background:#b4b8bc"></div>
<div style="left:431px;top:233px;width:3px;height:1px;background:#b4b8bc"></div>
<div style="left:461px;top:104px;width:3px;height:1px;background:#b4b8bc"></div>
<div style="left:465px;top:104px;width:3px;height:1px;background:#b4b8bc"></div>
<div style="left:469px;top:104px;width:3px;height:1px;background:#b4b8bc"></div>
<div style="left:461px;top:119px;width:3px;height:1px;background:#b4b8bc"></div>
<div style="left:465px;top:119px;width:3px;height:1px;background:#b4b8bc"></div>
<div style="left:469px;top:119px;width:3px;height:1px;background:#b4b8bc"></div>
<div style="left:461px;top:135px;width:3px;height:1px;background:#b4b8bc"></div>
<div style="left:465px;top:135px;width:3px;height:1px;background:#b4b8bc"></div>
<div style="left:469px;top:135px;width:3px;height:1px;background:#b4b8bc"></div>
<div style="left:461px;top:152px;width:3px;height:1px;background:#b4b8bc"></div>
<div style="left:465px;top:152px;width:3px;height:1px;background:#b4b8bc"></div>
<div style="left:469px;top:152px;width:3px;height:1px;background:#b4b8bc"></div>
<div style="left:461px;top:168px;width:3px;height:1px;background:#b4b8bc"></div>
<div style="left:465px;top:168px;width:3px;height:1px;background:#b4b8bc"></div>
<div style="left:469px;top:168px;width:3px;height:1px;background:#b4b8bc"></div>
<div style="left:461px;top:185px;width:3px;height:1px;background:#b4b8bc"></div>
<div style="left:465px;top:185px;width:3px;height:1px;background:#b4b8bc"></div>
<div style="left:469px;top:185px;width:3px;height:1px;background:#b4b8bc"></div>
<div style="left:461px;top:200px;width:3px;height:1px;background:#b4b8bc"></div>
<div style="left:465px;top:200px;width:3px;height:1px;background:#b4b8bc"></div>
<div style="left:469px;top:200px;width:3px;height:1px;background:#b4b8bc"></div>
<div style="left:461px;top:217px;width:3px;height:1px;background:#b4b8bc"></div>
<div style="left:465px;top:217px;width:3px;height:1px;background:#b4b8bc"></div>
<div style="left:469px;top:217px;width:3px;height:1px;background:#b4b8bc"></div>
<div style="left:461px;top:233px;width:3px;height:1px;background:#b4b8bc"></div>
<div style="left:465px;top:233px;width:3px;height:1px;background:#b4b8bc"></div>
<div style="left:469px;top:233px;width:3px;height:1px;background:#b4b8bc"></div>
<div style="left:325px;top:101px;width:16px;height:138px;background:#000;border-left:1px solid #8c8c8c;border-top:1px solid #a8a8a8;border-right:1px solid #dcdcdc;border-bottom:2px solid #dcdcdc;box-sizing:border-box"></div>
<div style="left:332px;top:102px;width:1px;height:135px;background:#dcdcdc"></div>
<div style="left:326px;top:102px;width:6px;height:65px;background:repeating-linear-gradient(#0cc8d6 0 1.5px,#02a6b4 1.5px 2.5px)"></div>
<div style="left:333px;top:102px;width:7px;height:65px;background:repeating-linear-gradient(#0cc8d6 0 1.5px,#02a6b4 1.5px 2.5px)"></div>
<div style="left:363px;top:101px;width:16px;height:138px;background:#000;border-left:1px solid #8c8c8c;border-top:1px solid #a8a8a8;border-right:1px solid #dcdcdc;border-bottom:2px solid #dcdcdc;box-sizing:border-box"></div>
<div style="left:370px;top:102px;width:1px;height:135px;background:#dcdcdc"></div>
<div style="left:364px;top:102px;width:6px;height:59px;background:repeating-linear-gradient(#0cc8d6 0 1.5px,#02a6b4 1.5px 2.5px)"></div>
<div style="left:371px;top:102px;width:7px;height:59px;background:repeating-linear-gradient(#0cc8d6 0 1.5px,#02a6b4 1.5px 2.5px)"></div>
<div style="left:401px;top:101px;width:16px;height:138px;background:#000;border-left:1px solid #8c8c8c;border-top:1px solid #a8a8a8;border-right:1px solid #dcdcdc;border-bottom:2px solid #dcdcdc;box-sizing:border-box"></div>
<div style="left:408px;top:102px;width:1px;height:135px;background:#dcdcdc"></div>
<div style="left:402px;top:102px;width:6px;height:69px;background:repeating-linear-gradient(#0cc8d6 0 1.5px,#02a6b4 1.5px 2.5px)"></div>
<div style="left:409px;top:102px;width:7px;height:69px;background:repeating-linear-gradient(#0cc8d6 0 1.5px,#02a6b4 1.5px 2.5px)"></div>
<div style="left:439px;top:101px;width:16px;height:138px;background:#000;border-left:1px solid #8c8c8c;border-top:1px solid #a8a8a8;border-right:1px solid #dcdcdc;border-bottom:2px solid #dcdcdc;box-sizing:border-box"></div>
<div style="left:446px;top:102px;width:1px;height:135px;background:#dcdcdc"></div>
<div style="left:440px;top:102px;width:6px;height:40px;background:repeating-linear-gradient(#0cc8d6 0 1.5px,#02a6b4 1.5px 2.5px)"></div>
<div style="left:440px;top:141px;width:6px;height:1px;background:#30e8f8"></div>
<div style="left:440px;top:144px;width:6px;height:2px;background:#20d8e8"></div>
<div style="left:447px;top:102px;width:7px;height:41px;background:repeating-linear-gradient(#0cc8d6 0 1.5px,#02a6b4 1.5px 2.5px)"></div>
<div style="left:447px;top:142px;width:7px;height:1px;background:#30e8f8"></div>
<div style="left:447px;top:146px;width:7px;height:2px;background:#20d8e8"></div>
<div style="left:477px;top:101px;width:16px;height:138px;background:#000;border-left:1px solid #8c8c8c;border-top:1px solid #a8a8a8;border-right:1px solid #dcdcdc;border-bottom:2px solid #dcdcdc;box-sizing:border-box"></div>
<div style="left:484px;top:102px;width:1px;height:135px;background:#dcdcdc"></div>
<div style="left:478px;top:102px;width:6px;height:40px;background:repeating-linear-gradient(#0cc8d6 0 1.5px,#02a6b4 1.5px 2.5px)"></div>
<div style="left:478px;top:141px;width:6px;height:1px;background:#30e8f8"></div>
<div style="left:478px;top:144px;width:6px;height:2px;background:#20d8e8"></div>
<div style="left:485px;top:102px;width:7px;height:37px;background:repeating-linear-gradient(#0cc8d6 0 1.5px,#02a6b4 1.5px 2.5px)"></div>
<div style="left:485px;top:142px;width:7px;height:2px;background:#20d8e8"></div>
<div class="t s" style="left:183px;width:300px;text-align:center;top:238.0px;height:14px;line-height:14px;font-size:10px;color:#dcdcdc;letter-spacing:0px;font-weight:normal;">1</div>
<div class="t s" style="left:218.5px;width:300px;text-align:center;top:238.0px;height:14px;line-height:14px;font-size:10px;color:#dcdcdc;letter-spacing:0px;font-weight:normal;">2</div>
<div class="t s" style="left:258.5px;width:300px;text-align:center;top:238.0px;height:14px;line-height:14px;font-size:10px;color:#dcdcdc;letter-spacing:0px;font-weight:normal;">3</div>
<div class="t s" style="left:296.5px;width:300px;text-align:center;top:238.0px;height:14px;line-height:14px;font-size:10px;color:#dcdcdc;letter-spacing:0px;font-weight:normal;">4</div>
<div class="t s" style="left:335px;width:300px;text-align:center;top:238.0px;height:14px;line-height:14px;font-size:10px;color:#dcdcdc;letter-spacing:0px;font-weight:normal;">5</div>
<div class="t s" style="left:381.5px;width:300px;text-align:center;top:85.5px;height:14px;line-height:14px;font-size:10px;color:#dcdcdc;letter-spacing:-0.6px;font-weight:normal;">Loudness GR</div>
<div class="t s" style="left:215.5px;width:300px;text-align:right;top:96.5px;height:14px;line-height:14px;font-size:10px;color:#dcdcdc;letter-spacing:-0.1px;font-weight:normal;">0</div>
<div style="left:518px;top:102px;width:3px;height:1px;background:#b4b8bc"></div>
<div style="left:522px;top:102px;width:3px;height:1px;background:#b4b8bc"></div>
<div style="left:518px;top:117px;width:3px;height:1px;background:#b4b8bc"></div>
<div style="left:522px;top:117px;width:3px;height:1px;background:#b4b8bc"></div>
<div class="t s" style="left:215.5px;width:300px;text-align:right;top:128.29999999999998px;height:14px;line-height:14px;font-size:10px;color:#dcdcdc;letter-spacing:-0.1px;font-weight:normal;">3</div>
<div style="left:518px;top:134px;width:3px;height:1px;background:#b4b8bc"></div>
<div style="left:522px;top:134px;width:3px;height:1px;background:#b4b8bc"></div>
<div style="left:518px;top:150px;width:3px;height:1px;background:#b4b8bc"></div>
<div style="left:522px;top:150px;width:3px;height:1px;background:#b4b8bc"></div>
<div class="t s" style="left:215.5px;width:300px;text-align:right;top:160.79999999999998px;height:14px;line-height:14px;font-size:10px;color:#dcdcdc;letter-spacing:-0.1px;font-weight:normal;">6</div>
<div style="left:518px;top:167px;width:3px;height:1px;background:#b4b8bc"></div>
<div style="left:522px;top:167px;width:3px;height:1px;background:#b4b8bc"></div>
<div style="left:518px;top:183px;width:3px;height:1px;background:#b4b8bc"></div>
<div style="left:522px;top:183px;width:3px;height:1px;background:#b4b8bc"></div>
<div class="t s" style="left:215.5px;width:300px;text-align:right;top:193.7px;height:14px;line-height:14px;font-size:10px;color:#dcdcdc;letter-spacing:-0.1px;font-weight:normal;">9</div>
<div style="left:518px;top:200px;width:3px;height:1px;background:#b4b8bc"></div>
<div style="left:522px;top:200px;width:3px;height:1px;background:#b4b8bc"></div>
<div style="left:518px;top:216px;width:3px;height:1px;background:#b4b8bc"></div>
<div style="left:522px;top:216px;width:3px;height:1px;background:#b4b8bc"></div>
<div class="t s" style="left:215.5px;width:300px;text-align:right;top:226.2px;height:14px;line-height:14px;font-size:10px;color:#dcdcdc;letter-spacing:-0.1px;font-weight:normal;">12</div>
<div style="left:518px;top:232px;width:3px;height:1px;background:#b4b8bc"></div>
<div style="left:522px;top:232px;width:3px;height:1px;background:#b4b8bc"></div>
<div style="left:527px;top:101px;width:16px;height:138px;background:#000;border-left:1px solid #8c8c8c;border-top:1px solid #a8a8a8;border-right:1px solid #dcdcdc;border-bottom:2px solid #dcdcdc;box-sizing:border-box"></div>
<div style="left:534px;top:102px;width:1px;height:135px;background:#dcdcdc"></div>
<div class="t s" style="left:444.5px;width:300px;text-align:center;top:85.5px;height:14px;line-height:14px;font-size:10px;color:#dcdcdc;letter-spacing:-0.6px;font-weight:normal;">Limiter 1</div>
<div class="t s" style="left:262.5px;width:300px;text-align:right;top:96.5px;height:14px;line-height:14px;font-size:10px;color:#dcdcdc;letter-spacing:-0.1px;font-weight:normal;">0</div>
<div style="left:565px;top:102px;width:3px;height:1px;background:#b4b8bc"></div>
<div style="left:569px;top:102px;width:3px;height:1px;background:#b4b8bc"></div>
<div style="left:565px;top:117px;width:3px;height:1px;background:#b4b8bc"></div>
<div style="left:569px;top:117px;width:3px;height:1px;background:#b4b8bc"></div>
<div class="t s" style="left:262.5px;width:300px;text-align:right;top:128.29999999999998px;height:14px;line-height:14px;font-size:10px;color:#dcdcdc;letter-spacing:-0.1px;font-weight:normal;">3</div>
<div style="left:565px;top:134px;width:3px;height:1px;background:#b4b8bc"></div>
<div style="left:569px;top:134px;width:3px;height:1px;background:#b4b8bc"></div>
<div style="left:565px;top:150px;width:3px;height:1px;background:#b4b8bc"></div>
<div style="left:569px;top:150px;width:3px;height:1px;background:#b4b8bc"></div>
<div class="t s" style="left:262.5px;width:300px;text-align:right;top:160.79999999999998px;height:14px;line-height:14px;font-size:10px;color:#dcdcdc;letter-spacing:-0.1px;font-weight:normal;">6</div>
<div style="left:565px;top:167px;width:3px;height:1px;background:#b4b8bc"></div>
<div style="left:569px;top:167px;width:3px;height:1px;background:#b4b8bc"></div>
<div style="left:565px;top:183px;width:3px;height:1px;background:#b4b8bc"></div>
<div style="left:569px;top:183px;width:3px;height:1px;background:#b4b8bc"></div>
<div class="t s" style="left:262.5px;width:300px;text-align:right;top:193.7px;height:14px;line-height:14px;font-size:10px;color:#dcdcdc;letter-spacing:-0.1px;font-weight:normal;">9</div>
<div style="left:565px;top:200px;width:3px;height:1px;background:#b4b8bc"></div>
<div style="left:569px;top:200px;width:3px;height:1px;background:#b4b8bc"></div>
<div style="left:565px;top:216px;width:3px;height:1px;background:#b4b8bc"></div>
<div style="left:569px;top:216px;width:3px;height:1px;background:#b4b8bc"></div>
<div class="t s" style="left:262.5px;width:300px;text-align:right;top:226.2px;height:14px;line-height:14px;font-size:10px;color:#dcdcdc;letter-spacing:-0.1px;font-weight:normal;">12</div>
<div style="left:565px;top:232px;width:3px;height:1px;background:#b4b8bc"></div>
<div style="left:569px;top:232px;width:3px;height:1px;background:#b4b8bc"></div>
<div style="left:591px;top:102px;width:3px;height:1px;background:#b4b8bc"></div>
<div style="left:595px;top:102px;width:3px;height:1px;background:#b4b8bc"></div>
<div style="left:599px;top:102px;width:3px;height:1px;background:#b4b8bc"></div>
<div style="left:591px;top:117px;width:3px;height:1px;background:#b4b8bc"></div>
<div style="left:595px;top:117px;width:3px;height:1px;background:#b4b8bc"></div>
<div style="left:599px;top:117px;width:3px;height:1px;background:#b4b8bc"></div>
<div style="left:591px;top:134px;width:3px;height:1px;background:#b4b8bc"></div>
<div style="left:595px;top:134px;width:3px;height:1px;background:#b4b8bc"></div>
<div style="left:599px;top:134px;width:3px;height:1px;background:#b4b8bc"></div>
<div style="left:591px;top:150px;width:3px;height:1px;background:#b4b8bc"></div>
<div style="left:595px;top:150px;width:3px;height:1px;background:#b4b8bc"></div>
<div style="left:599px;top:150px;width:3px;height:1px;background:#b4b8bc"></div>
<div style="left:591px;top:167px;width:3px;height:1px;background:#b4b8bc"></div>
<div style="left:595px;top:167px;width:3px;height:1px;background:#b4b8bc"></div>
<div style="left:599px;top:167px;width:3px;height:1px;background:#b4b8bc"></div>
<div style="left:591px;top:183px;width:3px;height:1px;background:#b4b8bc"></div>
<div style="left:595px;top:183px;width:3px;height:1px;background:#b4b8bc"></div>
<div style="left:599px;top:183px;width:3px;height:1px;background:#b4b8bc"></div>
<div style="left:591px;top:200px;width:3px;height:1px;background:#b4b8bc"></div>
<div style="left:595px;top:200px;width:3px;height:1px;background:#b4b8bc"></div>
<div style="left:599px;top:200px;width:3px;height:1px;background:#b4b8bc"></div>
<div style="left:591px;top:216px;width:3px;height:1px;background:#b4b8bc"></div>
<div style="left:595px;top:216px;width:3px;height:1px;background:#b4b8bc"></div>
<div style="left:599px;top:216px;width:3px;height:1px;background:#b4b8bc"></div>
<div style="left:591px;top:232px;width:3px;height:1px;background:#b4b8bc"></div>
<div style="left:595px;top:232px;width:3px;height:1px;background:#b4b8bc"></div>
<div style="left:599px;top:232px;width:3px;height:1px;background:#b4b8bc"></div>
<div style="left:576px;top:101px;width:8px;height:138px;background:#000;border-left:1px solid #8c8c8c;border-top:1px solid #a8a8a8;border-right:1px solid #dcdcdc;border-bottom:2px solid #dcdcdc;box-sizing:border-box"></div>
<div style="left:607px;top:101px;width:8px;height:138px;background:#000;border-left:1px solid #8c8c8c;border-top:1px solid #a8a8a8;border-right:1px solid #dcdcdc;border-bottom:2px solid #dcdcdc;box-sizing:border-box"></div>
<div class="t s" style="left:430px;width:300px;text-align:center;top:239.0px;height:14px;line-height:14px;font-size:10px;color:#dcdcdc;letter-spacing:0px;font-weight:normal;">L</div>
<div class="t s" style="left:462px;width:300px;text-align:center;top:239.0px;height:14px;line-height:14px;font-size:10px;color:#dcdcdc;letter-spacing:0px;font-weight:normal;">R</div>
<div class="t s" style="left:528.5px;width:300px;text-align:center;top:85.5px;height:14px;line-height:14px;font-size:10px;color:#dcdcdc;letter-spacing:-0.6px;font-weight:normal;">Limiter 1 Output</div>
<div class="t s" style="left:346.5px;width:300px;text-align:right;top:96.5px;height:14px;line-height:14px;font-size:10px;color:#dcdcdc;letter-spacing:-0.1px;font-weight:normal;">0</div>
<div style="left:649px;top:102px;width:3px;height:1px;background:#b4b8bc"></div>
<div style="left:653px;top:102px;width:3px;height:1px;background:#b4b8bc"></div>
<div class="t s" style="left:346.5px;width:300px;text-align:right;top:111.5px;height:14px;line-height:14px;font-size:10px;color:#dcdcdc;letter-spacing:-0.1px;font-weight:normal;">-3</div>
<div style="left:649px;top:117px;width:3px;height:1px;background:#b4b8bc"></div>
<div style="left:653px;top:117px;width:3px;height:1px;background:#b4b8bc"></div>
<div class="t s" style="left:346.5px;width:300px;text-align:right;top:125.0px;height:14px;line-height:14px;font-size:10px;color:#dcdcdc;letter-spacing:-0.1px;font-weight:normal;">-6</div>
<div style="left:649px;top:131px;width:3px;height:1px;background:#b4b8bc"></div>
<div style="left:653px;top:131px;width:3px;height:1px;background:#b4b8bc"></div>
<div class="t s" style="left:346.5px;width:300px;text-align:right;top:140.0px;height:14px;line-height:14px;font-size:10px;color:#dcdcdc;letter-spacing:-0.1px;font-weight:normal;">-9</div>
<div style="left:649px;top:146px;width:3px;height:1px;background:#b4b8bc"></div>
<div style="left:653px;top:146px;width:3px;height:1px;background:#b4b8bc"></div>
<div class="t s" style="left:346.5px;width:300px;text-align:right;top:155.2px;height:14px;line-height:14px;font-size:10px;color:#dcdcdc;letter-spacing:-0.1px;font-weight:normal;">-12</div>
<div style="left:649px;top:161px;width:3px;height:1px;background:#b4b8bc"></div>
<div style="left:653px;top:161px;width:3px;height:1px;background:#b4b8bc"></div>
<div class="t s" style="left:346.5px;width:300px;text-align:right;top:170.2px;height:14px;line-height:14px;font-size:10px;color:#dcdcdc;letter-spacing:-0.1px;font-weight:normal;">-15</div>
<div style="left:649px;top:176px;width:3px;height:1px;background:#b4b8bc"></div>
<div style="left:653px;top:176px;width:3px;height:1px;background:#b4b8bc"></div>
<div class="t s" style="left:346.5px;width:300px;text-align:right;top:185.5px;height:14px;line-height:14px;font-size:10px;color:#dcdcdc;letter-spacing:-0.1px;font-weight:normal;">-18</div>
<div style="left:649px;top:191px;width:3px;height:1px;background:#b4b8bc"></div>
<div style="left:653px;top:191px;width:3px;height:1px;background:#b4b8bc"></div>
<div class="t s" style="left:346.5px;width:300px;text-align:right;top:200.5px;height:14px;line-height:14px;font-size:10px;color:#dcdcdc;letter-spacing:-0.1px;font-weight:normal;">-24</div>
<div style="left:649px;top:206px;width:3px;height:1px;background:#b4b8bc"></div>
<div style="left:653px;top:206px;width:3px;height:1px;background:#b4b8bc"></div>
<div class="t s" style="left:346.5px;width:300px;text-align:right;top:215.7px;height:14px;line-height:14px;font-size:10px;color:#dcdcdc;letter-spacing:-0.1px;font-weight:normal;">-30</div>
<div style="left:649px;top:222px;width:3px;height:1px;background:#b4b8bc"></div>
<div style="left:653px;top:222px;width:3px;height:1px;background:#b4b8bc"></div>
<div class="t s" style="left:346.5px;width:300px;text-align:right;top:229.2px;height:14px;line-height:14px;font-size:10px;color:#dcdcdc;letter-spacing:-0.1px;font-weight:normal;">-36</div>
<div style="left:649px;top:235px;width:3px;height:1px;background:#b4b8bc"></div>
<div style="left:653px;top:235px;width:3px;height:1px;background:#b4b8bc"></div>
<div style="left:676px;top:102px;width:3px;height:1px;background:#b4b8bc"></div>
<div style="left:680px;top:102px;width:3px;height:1px;background:#b4b8bc"></div>
<div style="left:684px;top:102px;width:3px;height:1px;background:#b4b8bc"></div>
<div style="left:676px;top:117px;width:3px;height:1px;background:#b4b8bc"></div>
<div style="left:680px;top:117px;width:3px;height:1px;background:#b4b8bc"></div>
<div style="left:684px;top:117px;width:3px;height:1px;background:#b4b8bc"></div>
<div style="left:676px;top:131px;width:3px;height:1px;background:#b4b8bc"></div>
<div style="left:680px;top:131px;width:3px;height:1px;background:#b4b8bc"></div>
<div style="left:684px;top:131px;width:3px;height:1px;background:#b4b8bc"></div>
<div style="left:676px;top:146px;width:3px;height:1px;background:#b4b8bc"></div>
<div style="left:680px;top:146px;width:3px;height:1px;background:#b4b8bc"></div>
<div style="left:684px;top:146px;width:3px;height:1px;background:#b4b8bc"></div>
<div style="left:676px;top:161px;width:3px;height:1px;background:#b4b8bc"></div>
<div style="left:680px;top:161px;width:3px;height:1px;background:#b4b8bc"></div>
<div style="left:684px;top:161px;width:3px;height:1px;background:#b4b8bc"></div>
<div style="left:676px;top:176px;width:3px;height:1px;background:#b4b8bc"></div>
<div style="left:680px;top:176px;width:3px;height:1px;background:#b4b8bc"></div>
<div style="left:684px;top:176px;width:3px;height:1px;background:#b4b8bc"></div>
<div style="left:676px;top:191px;width:3px;height:1px;background:#b4b8bc"></div>
<div style="left:680px;top:191px;width:3px;height:1px;background:#b4b8bc"></div>
<div style="left:684px;top:191px;width:3px;height:1px;background:#b4b8bc"></div>
<div style="left:676px;top:206px;width:3px;height:1px;background:#b4b8bc"></div>
<div style="left:680px;top:206px;width:3px;height:1px;background:#b4b8bc"></div>
<div style="left:684px;top:206px;width:3px;height:1px;background:#b4b8bc"></div>
<div style="left:676px;top:222px;width:3px;height:1px;background:#b4b8bc"></div>
<div style="left:680px;top:222px;width:3px;height:1px;background:#b4b8bc"></div>
<div style="left:684px;top:222px;width:3px;height:1px;background:#b4b8bc"></div>
<div style="left:676px;top:235px;width:3px;height:1px;background:#b4b8bc"></div>
<div style="left:680px;top:235px;width:3px;height:1px;background:#b4b8bc"></div>
<div style="left:684px;top:235px;width:3px;height:1px;background:#b4b8bc"></div>
<div style="left:660px;top:101px;width:8px;height:138px;background:#000;border-left:1px solid #8c8c8c;border-top:1px solid #a8a8a8;border-right:1px solid #dcdcdc;border-bottom:2px solid #dcdcdc;box-sizing:border-box"></div>
<div style="left:661px;top:106px;width:6px;height:1px;background:#f0b800"></div>
<div style="left:661px;top:117px;width:6px;height:120px;background:repeating-linear-gradient(#e2aa00 0 1.5px,#c49200 1.5px 2.5px)"></div>
<div style="left:692px;top:101px;width:8px;height:138px;background:#000;border-left:1px solid #8c8c8c;border-top:1px solid #a8a8a8;border-right:1px solid #dcdcdc;border-bottom:2px solid #dcdcdc;box-sizing:border-box"></div>
<div style="left:693px;top:106px;width:6px;height:1px;background:#f0b800"></div>
<div style="left:693px;top:112px;width:6px;height:2px;background:#a07800"></div>
<div style="left:693px;top:124px;width:6px;height:113px;background:repeating-linear-gradient(#e2aa00 0 1.5px,#c49200 1.5px 2.5px)"></div>
<div class="t s" style="left:514px;width:300px;text-align:center;top:239.0px;height:14px;line-height:14px;font-size:10px;color:#dcdcdc;letter-spacing:0px;font-weight:normal;">L</div>
<div class="t s" style="left:546.5px;width:300px;text-align:center;top:239.0px;height:14px;line-height:14px;font-size:10px;color:#dcdcdc;letter-spacing:0px;font-weight:normal;">R</div>
<div class="t s" style="left:607px;width:300px;text-align:center;top:85.5px;height:14px;line-height:14px;font-size:10px;color:#dcdcdc;letter-spacing:-0.6px;font-weight:normal;">Limiter 2</div>
<div class="t s" style="left:426.5px;width:300px;text-align:right;top:96.5px;height:14px;line-height:14px;font-size:10px;color:#dcdcdc;letter-spacing:-0.1px;font-weight:normal;">0</div>
<div style="left:730px;top:102px;width:3px;height:1px;background:#b4b8bc"></div>
<div style="left:734px;top:102px;width:3px;height:1px;background:#b4b8bc"></div>
<div style="left:730px;top:117px;width:3px;height:1px;background:#b4b8bc"></div>
<div style="left:734px;top:117px;width:3px;height:1px;background:#b4b8bc"></div>
<div class="t s" style="left:426.5px;width:300px;text-align:right;top:128.29999999999998px;height:14px;line-height:14px;font-size:10px;color:#dcdcdc;letter-spacing:-0.1px;font-weight:normal;">3</div>
<div style="left:730px;top:134px;width:3px;height:1px;background:#b4b8bc"></div>
<div style="left:734px;top:134px;width:3px;height:1px;background:#b4b8bc"></div>
<div style="left:730px;top:150px;width:3px;height:1px;background:#b4b8bc"></div>
<div style="left:734px;top:150px;width:3px;height:1px;background:#b4b8bc"></div>
<div class="t s" style="left:426.5px;width:300px;text-align:right;top:160.79999999999998px;height:14px;line-height:14px;font-size:10px;color:#dcdcdc;letter-spacing:-0.1px;font-weight:normal;">6</div>
<div style="left:730px;top:167px;width:3px;height:1px;background:#b4b8bc"></div>
<div style="left:734px;top:167px;width:3px;height:1px;background:#b4b8bc"></div>
<div style="left:730px;top:183px;width:3px;height:1px;background:#b4b8bc"></div>
<div style="left:734px;top:183px;width:3px;height:1px;background:#b4b8bc"></div>
<div class="t s" style="left:426.5px;width:300px;text-align:right;top:193.7px;height:14px;line-height:14px;font-size:10px;color:#dcdcdc;letter-spacing:-0.1px;font-weight:normal;">9</div>
<div style="left:730px;top:200px;width:3px;height:1px;background:#b4b8bc"></div>
<div style="left:734px;top:200px;width:3px;height:1px;background:#b4b8bc"></div>
<div style="left:730px;top:216px;width:3px;height:1px;background:#b4b8bc"></div>
<div style="left:734px;top:216px;width:3px;height:1px;background:#b4b8bc"></div>
<div class="t s" style="left:426.5px;width:300px;text-align:right;top:226.2px;height:14px;line-height:14px;font-size:10px;color:#dcdcdc;letter-spacing:-0.1px;font-weight:normal;">12</div>
<div style="left:730px;top:232px;width:3px;height:1px;background:#b4b8bc"></div>
<div style="left:734px;top:232px;width:3px;height:1px;background:#b4b8bc"></div>
<div style="left:756px;top:102px;width:3px;height:1px;background:#b4b8bc"></div>
<div style="left:760px;top:102px;width:3px;height:1px;background:#b4b8bc"></div>
<div style="left:764px;top:102px;width:3px;height:1px;background:#b4b8bc"></div>
<div style="left:756px;top:117px;width:3px;height:1px;background:#b4b8bc"></div>
<div style="left:760px;top:117px;width:3px;height:1px;background:#b4b8bc"></div>
<div style="left:764px;top:117px;width:3px;height:1px;background:#b4b8bc"></div>
<div style="left:756px;top:134px;width:3px;height:1px;background:#b4b8bc"></div>
<div style="left:760px;top:134px;width:3px;height:1px;background:#b4b8bc"></div>
<div style="left:764px;top:134px;width:3px;height:1px;background:#b4b8bc"></div>
<div style="left:756px;top:150px;width:3px;height:1px;background:#b4b8bc"></div>
<div style="left:760px;top:150px;width:3px;height:1px;background:#b4b8bc"></div>
<div style="left:764px;top:150px;width:3px;height:1px;background:#b4b8bc"></div>
<div style="left:756px;top:167px;width:3px;height:1px;background:#b4b8bc"></div>
<div style="left:760px;top:167px;width:3px;height:1px;background:#b4b8bc"></div>
<div style="left:764px;top:167px;width:3px;height:1px;background:#b4b8bc"></div>
<div style="left:756px;top:183px;width:3px;height:1px;background:#b4b8bc"></div>
<div style="left:760px;top:183px;width:3px;height:1px;background:#b4b8bc"></div>
<div style="left:764px;top:183px;width:3px;height:1px;background:#b4b8bc"></div>
<div style="left:756px;top:200px;width:3px;height:1px;background:#b4b8bc"></div>
<div style="left:760px;top:200px;width:3px;height:1px;background:#b4b8bc"></div>
<div style="left:764px;top:200px;width:3px;height:1px;background:#b4b8bc"></div>
<div style="left:756px;top:216px;width:3px;height:1px;background:#b4b8bc"></div>
<div style="left:760px;top:216px;width:3px;height:1px;background:#b4b8bc"></div>
<div style="left:764px;top:216px;width:3px;height:1px;background:#b4b8bc"></div>
<div style="left:756px;top:232px;width:3px;height:1px;background:#b4b8bc"></div>
<div style="left:760px;top:232px;width:3px;height:1px;background:#b4b8bc"></div>
<div style="left:764px;top:232px;width:3px;height:1px;background:#b4b8bc"></div>
<div style="left:740px;top:101px;width:8px;height:138px;background:#000;border-left:1px solid #8c8c8c;border-top:1px solid #a8a8a8;border-right:1px solid #dcdcdc;border-bottom:2px solid #dcdcdc;box-sizing:border-box"></div>
<div style="left:741px;top:103px;width:6px;height:1px;background:#e8e8e8"></div>
<div style="left:771px;top:101px;width:8px;height:138px;background:#000;border-left:1px solid #8c8c8c;border-top:1px solid #a8a8a8;border-right:1px solid #dcdcdc;border-bottom:2px solid #dcdcdc;box-sizing:border-box"></div>
<div class="t s" style="left:593px;width:300px;text-align:center;top:239.0px;height:14px;line-height:14px;font-size:10px;color:#dcdcdc;letter-spacing:0px;font-weight:normal;">L</div>
<div class="t s" style="left:626px;width:300px;text-align:center;top:239.0px;height:14px;line-height:14px;font-size:10px;color:#dcdcdc;letter-spacing:0px;font-weight:normal;">R</div>
<div class="t s" style="left:694.5px;width:300px;text-align:center;top:85.5px;height:14px;line-height:14px;font-size:10px;color:#dcdcdc;letter-spacing:-0.6px;font-weight:normal;">Limiter 2 Output</div>
<div class="t s" style="left:510px;width:300px;text-align:right;top:96.5px;height:14px;line-height:14px;font-size:10px;color:#dcdcdc;letter-spacing:-0.1px;font-weight:normal;">0</div>
<div style="left:813px;top:102px;width:3px;height:1px;background:#b4b8bc"></div>
<div style="left:817px;top:102px;width:3px;height:1px;background:#b4b8bc"></div>
<div class="t s" style="left:510px;width:300px;text-align:right;top:111.5px;height:14px;line-height:14px;font-size:10px;color:#dcdcdc;letter-spacing:-0.1px;font-weight:normal;">-3</div>
<div style="left:813px;top:117px;width:3px;height:1px;background:#b4b8bc"></div>
<div style="left:817px;top:117px;width:3px;height:1px;background:#b4b8bc"></div>
<div class="t s" style="left:510px;width:300px;text-align:right;top:125.0px;height:14px;line-height:14px;font-size:10px;color:#dcdcdc;letter-spacing:-0.1px;font-weight:normal;">-6</div>
<div style="left:813px;top:131px;width:3px;height:1px;background:#b4b8bc"></div>
<div style="left:817px;top:131px;width:3px;height:1px;background:#b4b8bc"></div>
<div class="t s" style="left:510px;width:300px;text-align:right;top:140.0px;height:14px;line-height:14px;font-size:10px;color:#dcdcdc;letter-spacing:-0.1px;font-weight:normal;">-9</div>
<div style="left:813px;top:146px;width:3px;height:1px;background:#b4b8bc"></div>
<div style="left:817px;top:146px;width:3px;height:1px;background:#b4b8bc"></div>
<div class="t s" style="left:510px;width:300px;text-align:right;top:155.2px;height:14px;line-height:14px;font-size:10px;color:#dcdcdc;letter-spacing:-0.1px;font-weight:normal;">-12</div>
<div style="left:813px;top:161px;width:3px;height:1px;background:#b4b8bc"></div>
<div style="left:817px;top:161px;width:3px;height:1px;background:#b4b8bc"></div>
<div class="t s" style="left:510px;width:300px;text-align:right;top:170.2px;height:14px;line-height:14px;font-size:10px;color:#dcdcdc;letter-spacing:-0.1px;font-weight:normal;">-15</div>
<div style="left:813px;top:176px;width:3px;height:1px;background:#b4b8bc"></div>
<div style="left:817px;top:176px;width:3px;height:1px;background:#b4b8bc"></div>
<div class="t s" style="left:510px;width:300px;text-align:right;top:185.5px;height:14px;line-height:14px;font-size:10px;color:#dcdcdc;letter-spacing:-0.1px;font-weight:normal;">-18</div>
<div style="left:813px;top:191px;width:3px;height:1px;background:#b4b8bc"></div>
<div style="left:817px;top:191px;width:3px;height:1px;background:#b4b8bc"></div>
<div class="t s" style="left:510px;width:300px;text-align:right;top:200.5px;height:14px;line-height:14px;font-size:10px;color:#dcdcdc;letter-spacing:-0.1px;font-weight:normal;">-24</div>
<div style="left:813px;top:206px;width:3px;height:1px;background:#b4b8bc"></div>
<div style="left:817px;top:206px;width:3px;height:1px;background:#b4b8bc"></div>
<div class="t s" style="left:510px;width:300px;text-align:right;top:215.7px;height:14px;line-height:14px;font-size:10px;color:#dcdcdc;letter-spacing:-0.1px;font-weight:normal;">-30</div>
<div style="left:813px;top:222px;width:3px;height:1px;background:#b4b8bc"></div>
<div style="left:817px;top:222px;width:3px;height:1px;background:#b4b8bc"></div>
<div class="t s" style="left:510px;width:300px;text-align:right;top:229.2px;height:14px;line-height:14px;font-size:10px;color:#dcdcdc;letter-spacing:-0.1px;font-weight:normal;">-36</div>
<div style="left:813px;top:235px;width:3px;height:1px;background:#b4b8bc"></div>
<div style="left:817px;top:235px;width:3px;height:1px;background:#b4b8bc"></div>
<div style="left:839px;top:102px;width:3px;height:1px;background:#b4b8bc"></div>
<div style="left:843px;top:102px;width:3px;height:1px;background:#b4b8bc"></div>
<div style="left:847px;top:102px;width:3px;height:1px;background:#b4b8bc"></div>
<div style="left:839px;top:117px;width:3px;height:1px;background:#b4b8bc"></div>
<div style="left:843px;top:117px;width:3px;height:1px;background:#b4b8bc"></div>
<div style="left:847px;top:117px;width:3px;height:1px;background:#b4b8bc"></div>
<div style="left:839px;top:131px;width:3px;height:1px;background:#b4b8bc"></div>
<div style="left:843px;top:131px;width:3px;height:1px;background:#b4b8bc"></div>
<div style="left:847px;top:131px;width:3px;height:1px;background:#b4b8bc"></div>
<div style="left:839px;top:146px;width:3px;height:1px;background:#b4b8bc"></div>
<div style="left:843px;top:146px;width:3px;height:1px;background:#b4b8bc"></div>
<div style="left:847px;top:146px;width:3px;height:1px;background:#b4b8bc"></div>
<div style="left:839px;top:161px;width:3px;height:1px;background:#b4b8bc"></div>
<div style="left:843px;top:161px;width:3px;height:1px;background:#b4b8bc"></div>
<div style="left:847px;top:161px;width:3px;height:1px;background:#b4b8bc"></div>
<div style="left:839px;top:176px;width:3px;height:1px;background:#b4b8bc"></div>
<div style="left:843px;top:176px;width:3px;height:1px;background:#b4b8bc"></div>
<div style="left:847px;top:176px;width:3px;height:1px;background:#b4b8bc"></div>
<div style="left:839px;top:191px;width:3px;height:1px;background:#b4b8bc"></div>
<div style="left:843px;top:191px;width:3px;height:1px;background:#b4b8bc"></div>
<div style="left:847px;top:191px;width:3px;height:1px;background:#b4b8bc"></div>
<div style="left:839px;top:206px;width:3px;height:1px;background:#b4b8bc"></div>
<div style="left:843px;top:206px;width:3px;height:1px;background:#b4b8bc"></div>
<div style="left:847px;top:206px;width:3px;height:1px;background:#b4b8bc"></div>
<div style="left:839px;top:222px;width:3px;height:1px;background:#b4b8bc"></div>
<div style="left:843px;top:222px;width:3px;height:1px;background:#b4b8bc"></div>
<div style="left:847px;top:222px;width:3px;height:1px;background:#b4b8bc"></div>
<div style="left:839px;top:235px;width:3px;height:1px;background:#b4b8bc"></div>
<div style="left:843px;top:235px;width:3px;height:1px;background:#b4b8bc"></div>
<div style="left:847px;top:235px;width:3px;height:1px;background:#b4b8bc"></div>
<div style="left:824px;top:101px;width:8px;height:138px;background:#000;border-left:1px solid #8c8c8c;border-top:1px solid #a8a8a8;border-right:1px solid #dcdcdc;border-bottom:2px solid #dcdcdc;box-sizing:border-box"></div>
<div style="left:825px;top:108px;width:6px;height:2px;background:repeating-linear-gradient(#e2aa00 0 1.5px,#c49200 1.5px 2.5px)"></div>
<div style="left:825px;top:119px;width:6px;height:118px;background:repeating-linear-gradient(#e2aa00 0 1.5px,#c49200 1.5px 2.5px)"></div>
<div style="left:856px;top:101px;width:8px;height:138px;background:#000;border-left:1px solid #8c8c8c;border-top:1px solid #a8a8a8;border-right:1px solid #dcdcdc;border-bottom:2px solid #dcdcdc;box-sizing:border-box"></div>
<div style="left:857px;top:112px;width:6px;height:2px;background:repeating-linear-gradient(#e2aa00 0 1.5px,#c49200 1.5px 2.5px)"></div>
<div style="left:857px;top:126px;width:6px;height:111px;background:repeating-linear-gradient(#e2aa00 0 1.5px,#c49200 1.5px 2.5px)"></div>
<div class="t s" style="left:679px;width:300px;text-align:center;top:239.0px;height:14px;line-height:14px;font-size:10px;color:#dcdcdc;letter-spacing:0px;font-weight:normal;">L</div>
<div class="t s" style="left:710px;width:300px;text-align:center;top:239.0px;height:14px;line-height:14px;font-size:10px;color:#dcdcdc;letter-spacing:0px;font-weight:normal;">R</div>
<div class="t s" style="left:787.5px;width:300px;text-align:center;top:84.0px;height:14px;line-height:14px;font-size:10px;color:#dcdcdc;letter-spacing:-0.6px;font-weight:normal;">Loudness Level</div>
<div class="t s" style="left:591px;width:300px;text-align:right;top:95.4px;height:14px;line-height:14px;font-size:10px;color:#dcdcdc;letter-spacing:-0.1px;font-weight:normal;">6</div>
<div style="left:893px;top:101px;width:3px;height:1px;background:#b4b8bc"></div>
<div style="left:897px;top:101px;width:3px;height:1px;background:#b4b8bc"></div>
<div class="t s" style="left:591px;width:300px;text-align:right;top:114.2px;height:14px;line-height:14px;font-size:10px;color:#dcdcdc;letter-spacing:-0.1px;font-weight:normal;">3</div>
<div style="left:893px;top:120px;width:3px;height:1px;background:#b4b8bc"></div>
<div style="left:897px;top:120px;width:3px;height:1px;background:#b4b8bc"></div>
<div class="t s" style="left:591px;width:300px;text-align:right;top:133.5px;height:14px;line-height:14px;font-size:10px;color:#dcdcdc;letter-spacing:-0.1px;font-weight:normal;">0</div>
<div style="left:893px;top:139px;width:3px;height:1px;background:#b4b8bc"></div>
<div style="left:897px;top:139px;width:3px;height:1px;background:#b4b8bc"></div>
<div class="t s" style="left:591px;width:300px;text-align:right;top:152.6px;height:14px;line-height:14px;font-size:10px;color:#dcdcdc;letter-spacing:-0.1px;font-weight:normal;">-3</div>
<div style="left:893px;top:158px;width:3px;height:1px;background:#b4b8bc"></div>
<div style="left:897px;top:158px;width:3px;height:1px;background:#b4b8bc"></div>
<div class="t s" style="left:591px;width:300px;text-align:right;top:172.1px;height:14px;line-height:14px;font-size:10px;color:#dcdcdc;letter-spacing:-0.1px;font-weight:normal;">-6</div>
<div style="left:893px;top:178px;width:3px;height:1px;background:#b4b8bc"></div>
<div style="left:897px;top:178px;width:3px;height:1px;background:#b4b8bc"></div>
<div class="t s" style="left:591px;width:300px;text-align:right;top:190.39999999999998px;height:14px;line-height:14px;font-size:10px;color:#dcdcdc;letter-spacing:-0.1px;font-weight:normal;">-9</div>
<div style="left:893px;top:196px;width:3px;height:1px;background:#b4b8bc"></div>
<div style="left:897px;top:196px;width:3px;height:1px;background:#b4b8bc"></div>
<div class="t s" style="left:591px;width:300px;text-align:right;top:209.7px;height:14px;line-height:14px;font-size:10px;color:#dcdcdc;letter-spacing:-0.1px;font-weight:normal;">-12</div>
<div style="left:893px;top:216px;width:3px;height:1px;background:#b4b8bc"></div>
<div style="left:897px;top:216px;width:3px;height:1px;background:#b4b8bc"></div>
<div class="t s" style="left:591px;width:300px;text-align:right;top:229.2px;height:14px;line-height:14px;font-size:10px;color:#dcdcdc;letter-spacing:-0.1px;font-weight:normal;">-15</div>
<div style="left:893px;top:235px;width:3px;height:1px;background:#b4b8bc"></div>
<div style="left:897px;top:235px;width:3px;height:1px;background:#b4b8bc"></div>
<div class="t s" style="left:647px;width:300px;text-align:right;top:95.4px;height:14px;line-height:14px;font-size:10px;color:#dcdcdc;letter-spacing:-0.1px;font-weight:normal;">6</div>
<div style="left:949px;top:101px;width:3px;height:1px;background:#b4b8bc"></div>
<div style="left:953px;top:101px;width:3px;height:1px;background:#b4b8bc"></div>
<div class="t s" style="left:647px;width:300px;text-align:right;top:114.2px;height:14px;line-height:14px;font-size:10px;color:#dcdcdc;letter-spacing:-0.1px;font-weight:normal;">3</div>
<div style="left:949px;top:120px;width:3px;height:1px;background:#b4b8bc"></div>
<div style="left:953px;top:120px;width:3px;height:1px;background:#b4b8bc"></div>
<div class="t s" style="left:647px;width:300px;text-align:right;top:133.5px;height:14px;line-height:14px;font-size:10px;color:#dcdcdc;letter-spacing:-0.1px;font-weight:normal;">0</div>
<div style="left:949px;top:139px;width:3px;height:1px;background:#b4b8bc"></div>
<div style="left:953px;top:139px;width:3px;height:1px;background:#b4b8bc"></div>
<div class="t s" style="left:647px;width:300px;text-align:right;top:152.6px;height:14px;line-height:14px;font-size:10px;color:#dcdcdc;letter-spacing:-0.1px;font-weight:normal;">-3</div>
<div style="left:949px;top:158px;width:3px;height:1px;background:#b4b8bc"></div>
<div style="left:953px;top:158px;width:3px;height:1px;background:#b4b8bc"></div>
<div class="t s" style="left:647px;width:300px;text-align:right;top:172.1px;height:14px;line-height:14px;font-size:10px;color:#dcdcdc;letter-spacing:-0.1px;font-weight:normal;">-6</div>
<div style="left:949px;top:178px;width:3px;height:1px;background:#b4b8bc"></div>
<div style="left:953px;top:178px;width:3px;height:1px;background:#b4b8bc"></div>
<div class="t s" style="left:647px;width:300px;text-align:right;top:190.39999999999998px;height:14px;line-height:14px;font-size:10px;color:#dcdcdc;letter-spacing:-0.1px;font-weight:normal;">-9</div>
<div style="left:949px;top:196px;width:3px;height:1px;background:#b4b8bc"></div>
<div style="left:953px;top:196px;width:3px;height:1px;background:#b4b8bc"></div>
<div class="t s" style="left:647px;width:300px;text-align:right;top:209.7px;height:14px;line-height:14px;font-size:10px;color:#dcdcdc;letter-spacing:-0.1px;font-weight:normal;">-12</div>
<div style="left:949px;top:216px;width:3px;height:1px;background:#b4b8bc"></div>
<div style="left:953px;top:216px;width:3px;height:1px;background:#b4b8bc"></div>
<div class="t s" style="left:647px;width:300px;text-align:right;top:229.2px;height:14px;line-height:14px;font-size:10px;color:#dcdcdc;letter-spacing:-0.1px;font-weight:normal;">-15</div>
<div style="left:949px;top:235px;width:3px;height:1px;background:#b4b8bc"></div>
<div style="left:953px;top:235px;width:3px;height:1px;background:#b4b8bc"></div>
<div style="left:902px;top:100px;width:8px;height:137px;background:#000;border-left:1px solid #8c8c8c;border-top:1px solid #a8a8a8;border-right:1px solid #dcdcdc;border-bottom:2px solid #dcdcdc;box-sizing:border-box"></div>
<div style="left:903px;top:120px;width:6px;height:20px;background:#f0b000"></div>
<div style="left:903px;top:140px;width:6px;height:95px;background:#109010"></div>
<div style="left:917px;top:100px;width:8px;height:137px;background:#000;border-left:1px solid #8c8c8c;border-top:1px solid #a8a8a8;border-right:1px solid #dcdcdc;border-bottom:2px solid #dcdcdc;box-sizing:border-box"></div>
<div style="left:918px;top:120px;width:6px;height:20px;background:#f0b000"></div>
<div style="left:918px;top:140px;width:6px;height:95px;background:#109010"></div>
<div style="left:957px;top:100px;width:8px;height:137px;background:#000;border-left:1px solid #8c8c8c;border-top:1px solid #a8a8a8;border-right:1px solid #dcdcdc;border-bottom:2px solid #dcdcdc;box-sizing:border-box"></div>
<div style="left:958px;top:101px;width:6px;height:39px;background:#f0b000"></div>
<div style="left:958px;top:140px;width:6px;height:95px;background:#109010"></div>
<div style="left:972px;top:100px;width:8px;height:137px;background:#000;border-left:1px solid #8c8c8c;border-top:1px solid #a8a8a8;border-right:1px solid #dcdcdc;border-bottom:2px solid #dcdcdc;box-sizing:border-box"></div>
<div style="left:973px;top:101px;width:6px;height:39px;background:#f0b000"></div>
<div style="left:973px;top:140px;width:6px;height:95px;background:#109010"></div>
<div class="t s" style="left:763.5px;width:300px;text-align:center;top:236.5px;height:14px;line-height:14px;font-size:10px;color:#dcdcdc;letter-spacing:-0.6px;font-weight:normal;">dB</div>
<div class="t s" style="left:819px;width:300px;text-align:center;top:236.5px;height:14px;line-height:14px;font-size:10px;color:#dcdcdc;letter-spacing:-0.6px;font-weight:normal;">LU</div>
<div style="left:1px;top:253px;width:1022px;height:13px;background:#f0f0f0"></div>
<div style="left:15px;top:253px;width:878px;height:12px;background:#cdcdcd"></div>
<svg style="position:absolute;left:4px;top:255px" width="8" height="9"><path d="M5.5 1 L2 4.5 L5.5 8" fill="none" stroke="#606060" stroke-width="1.6"/></svg>
<svg style="position:absolute;left:1013px;top:255px" width="8" height="9"><path d="M2.5 1 L6 4.5 L2.5 8" fill="none" stroke="#606060" stroke-width="1.6"/></svg>
<div style="left:1px;top:265px;width:1022px;height:2px;background:#f8f8f8"></div>
<div style="left:1px;top:268px;width:165px;height:1px;background:#a8a8a8"></div>
<div style="left:5px;top:270px;width:147px;height:11px;background:linear-gradient(#d9e4f1,#cbd9ea)"></div>
<div class="t s" style="left:7px;top:268.5px;height:14px;line-height:14px;font-size:10px;color:#1a1a30;letter-spacing:-0.5px;font-weight:normal;">Connection List</div>
<svg style="position:absolute;left:155px;top:272px" width="8" height="8"><path d="M1.2 1.2 L6 6 M6 1.2 L1.2 6" stroke="#000" stroke-width="1.6"/></svg>
<div style="left:5px;top:282px;width:159px;height:457px;background:#fff;border-left:2px solid #7a7a7a;border-top:2px solid #7a7a7a;border-right:1px solid #f4f4f4;border-bottom:1px solid #f8f8f8;box-sizing:border-box"></div>
<div style="left:10px;top:289px;width:8px;height:8px;background:#fff;border:1px solid #8a8a8a;box-sizing:border-box;border-radius:1px"></div>
<div style="left:12px;top:292px;width:4px;height:1px;background:#000"></div>
<div style="left:18px;top:292px;width:6px;height:1px;border-top:1px dotted #a8a8a8"></div>
<svg style="position:absolute;left:23px;top:284px" width="14" height="13"><path d="M1 3 H5 L6 2 H10 V4 H12 V11 H1 Z" fill="#e8e070" stroke="#303030" stroke-width="1"/><path d="M2 6 H13 L12 12 H1 Z" fill="#f0f000" stroke="#303030" stroke-width="1"/></svg>
<div class="t s" style="left:40px;top:284.0px;height:14px;line-height:14px;font-size:11px;color:#101010;letter-spacing:-0.4px;font-weight:normal;">All Connections</div>
<div style="left:29px;top:299px;width:1px;height:24px;border-left:1px dotted #a8a8a8"></div>
<div style="left:30px;top:307px;width:9px;height:1px;border-top:1px dotted #a8a8a8"></div>
<div style="left:30px;top:322px;width:9px;height:1px;border-top:1px dotted #a8a8a8"></div>
<svg style="position:absolute;left:39px;top:302px" width="14" height="11"><rect x="1.5" y="1.5" width="11" height="9" fill="#2a2a2a"/><rect x="0.5" y="0.5" width="10.5" height="8.5" fill="#8a8a8a" stroke="#6a6a6a" stroke-width="1"/><path d="M3 2 V7 M5 2 V5 M7 2 V5 M9 2 V7 M5 5 H7" stroke="#d0d0d0" stroke-width="0.9"/></svg>
<svg style="position:absolute;left:39px;top:317px" width="14" height="11"><rect x="1.5" y="1.5" width="11" height="9" fill="#303020"/><rect x="0.5" y="0.5" width="10.5" height="8.5" fill="#0a10f8" stroke="#2030c0" stroke-width="1"/><path d="M3 2 V6 M5 2 V4.5 M7 2 V4.5 M9 2 V6 M5 4.5 H7" stroke="#40c8ff" stroke-width="0.9"/></svg>
<div class="t s" style="left:56px;top:298.8px;height:14px;line-height:14px;font-size:11px;color:#101010;letter-spacing:-0.7px;font-weight:normal;">6300</div>
<div style="left:54px;top:314px;width:37px;height:16px;background:#ececec"></div>
<div class="t s" style="left:56px;top:313.8px;height:14px;line-height:14px;font-size:11px;color:#101010;letter-spacing:-0.7px;font-weight:normal;">6300 12</div>
<div style="left:166px;top:267px;width:856px;height:16px;background:#ffffff"></div>
<div style="left:358px;top:268px;width:51px;height:15px;background:#f0f0f0"></div>
<div style="left:173px;top:271px;width:9px;height:9px;background:#b8f8b8"></div>
<div class="t" style="left:193px;top:268.5px;height:14px;line-height:14px;font-size:11px;color:#7a7a7a;letter-spacing:-0.85px;font-weight:normal;">Less-More</div>
<div style="left:245px;top:269px;width:1px;height:12px;background:#9a9a9a"></div>
<div style="left:250px;top:271px;width:9px;height:9px;background:#b8f8b8"></div>
<div class="t" style="left:270px;top:268.5px;height:14px;line-height:14px;font-size:11px;color:#7a7a7a;letter-spacing:-0.45px;font-weight:normal;">Stereo Enhancer</div>
<div style="left:357px;top:269px;width:1px;height:12px;background:#9a9a9a"></div>
<div style="left:363px;top:271px;width:9px;height:9px;background:#ff8080"></div>
<div class="t" style="left:382px;top:268.5px;height:14px;line-height:14px;font-size:11px;color:#000;letter-spacing:-1.1px;font-weight:bold;">AGC</div>
<div style="left:409px;top:269px;width:1px;height:12px;background:#9a9a9a"></div>
<div style="left:414px;top:271px;width:9px;height:9px;background:#b8f8b8"></div>
<div class="t" style="left:430px;top:268.5px;height:14px;line-height:14px;font-size:11px;color:#7a7a7a;letter-spacing:-1.0px;font-weight:normal;">EQ</div>
<div style="left:451px;top:269px;width:1px;height:12px;background:#9a9a9a"></div>
<div style="left:456px;top:271px;width:9px;height:9px;background:#ff8080"></div>
<div class="t" style="left:476px;top:268.5px;height:14px;line-height:14px;font-size:11px;color:#7a7a7a;letter-spacing:-0.6px;font-weight:normal;">Multiband</div>
<div style="left:526px;top:269px;width:1px;height:12px;background:#9a9a9a"></div>
<div style="left:532px;top:271px;width:9px;height:9px;background:#ff8080"></div>
<div class="t" style="left:551px;top:268.5px;height:14px;line-height:14px;font-size:11px;color:#7a7a7a;letter-spacing:-0.75px;font-weight:normal;">Compressors</div>
<div style="left:619px;top:269px;width:1px;height:12px;background:#9a9a9a"></div>
<div style="left:624px;top:271px;width:9px;height:9px;background:#ff8080"></div>
<div class="t" style="left:644px;top:268.5px;height:14px;line-height:14px;font-size:11px;color:#7a7a7a;letter-spacing:-0.55px;font-weight:normal;">Speech Mode</div>
<div style="left:713px;top:269px;width:1px;height:12px;background:#9a9a9a"></div>
<div style="left:719px;top:271px;width:9px;height:9px;background:#ff8080"></div>
<div class="t" style="left:738px;top:268.5px;height:14px;line-height:14px;font-size:11px;color:#7a7a7a;letter-spacing:-0.75px;font-weight:normal;">Bandmix</div>
<div style="left:783px;top:269px;width:1px;height:12px;background:#9a9a9a"></div>
<div style="left:788px;top:271px;width:9px;height:9px;background:#ff8080"></div>
<div class="t" style="left:808px;top:268.5px;height:14px;line-height:14px;font-size:11px;color:#7a7a7a;letter-spacing:-0.4px;font-weight:normal;">Distortion</div>
<div style="left:862px;top:269px;width:1px;height:12px;background:#9a9a9a"></div>
<div style="left:173px;top:291px;width:843px;height:1px;background:#686868"></div>
<div style="left:173px;top:290px;width:843px;height:1px;background:#f8f8f8"></div>
<div style="left:173px;top:292px;width:1px;height:442px;background:#686868"></div>
<div style="left:174px;top:292px;width:825px;height:442px;background:#414141"></div>
<div style="left:999px;top:292px;width:1px;height:442px;background:#2a2a2a"></div>
<div style="left:173px;top:734px;width:844px;height:2px;background:#ffffff"></div>
<div style="left:1000px;top:292px;width:2px;height:442px;background:#fcfcfc"></div>
<div style="left:1002px;top:292px;width:13px;height:442px;background:#f0f0f0"></div>
<div style="left:1015px;top:291px;width:1px;height:445px;background:#f8f8f8"></div>
<div style="left:1002px;top:306px;width:12px;height:401px;background:#cdcdcd"></div>
<svg style="position:absolute;left:1003px;top:295px" width="10" height="8"><path d="M1.8 6.3 L5 3 L8.2 6.3" fill="none" stroke="#505050" stroke-width="1.9"/></svg>
<svg style="position:absolute;left:1003px;top:723px" width="10" height="8"><path d="M1.8 1.7 L5 5 L8.2 1.7" fill="none" stroke="#505050" stroke-width="1.9"/></svg>
<div style="left:183px;top:301px;width:427px;height:420px;border:1px solid #303030;box-sizing:border-box"></div>
<div style="left:184px;top:302px;width:425px;height:418px;border:1px solid #f2f2f2;box-sizing:border-box"></div>
<div style="left:185px;top:303px;width:423px;height:416px;border-left:1px solid #c8c8c8;border-right:1px solid #c8c8c8;border-top:1px solid #5a5a5a;border-bottom:1px solid #c0c0c0;box-sizing:border-box"></div>
<div style="left:186px;top:304px;width:421px;height:414px;border:1px solid #2c2c2c;box-sizing:border-box"></div>
<div style="left:191px;top:316px;width:188px;height:21px;border:1px solid #303030;box-sizing:border-box"></div>
<div style="left:192px;top:317px;width:186px;height:19px;border:1px solid #f2f2f2;box-sizing:border-box"></div>
<div style="left:193px;top:318px;width:184px;height:17px;border-left:1px solid #c8c8c8;border-right:1px solid #c8c8c8;border-top:1px solid #5a5a5a;border-bottom:1px solid #c0c0c0;box-sizing:border-box"></div>
<div style="left:194px;top:319px;width:182px;height:15px;border:1px solid #2c2c2c;box-sizing:border-box"></div>
<div class="t s" style="left:197px;top:317.5px;height:14px;line-height:14px;font-size:10px;color:#e0e0e0;letter-spacing:-0.4px;font-weight:normal;">AGC</div>
<div style="left:309px;top:320px;width:10px;height:10px;border-radius:50%;box-sizing:border-box;border:1.5px solid;border-color:#7c7c7c #e8e8e8 #f0f0f0 #7c7c7c;background:#fafafa"></div>
<div class="t s" style="left:323px;top:318.5px;height:14px;line-height:14px;font-size:10px;color:#e0e0e0;letter-spacing:-0.3px;font-weight:normal;">Off</div>
<div style="left:346px;top:320px;width:10px;height:10px;border-radius:50%;box-sizing:border-box;border:1.5px solid;border-color:#7c7c7c #e8e8e8 #f0f0f0 #7c7c7c;background:#fafafa"></div>
<div style="left:349px;top:323px;width:4px;height:4px;border-radius:50%;background:#000"></div>
<div class="t s" style="left:360px;top:318.5px;height:14px;line-height:14px;font-size:10px;color:#e0e0e0;letter-spacing:-0.3px;font-weight:normal;">On</div>
<div style="left:191px;top:355px;width:133px;height:18px;border-left:1px solid #989898;border-top:1px solid #909090;border-right:1px solid #f4f4f4;border-bottom:1px solid #f4f4f4;box-sizing:border-box"></div>
<div style="left:192px;top:356px;width:131px;height:16px;border-left:1px solid #2c2c2c;border-top:1px solid #383838;border-right:1px solid #2c2c2c;border-bottom:1px solid #2c2c2c;box-sizing:border-box"></div>
<div style="left:195px;top:361px;width:1px;height:4px;background:#2e2e2e"></div>
<div style="left:197px;top:361px;width:121px;height:1px;background:#9a9a9a"></div>
<div style="left:197px;top:362px;width:121px;height:1px;background:#b0b0b0"></div>
<div style="left:197px;top:363px;width:121px;height:1px;background:#f8f8f8"></div>
<div style="left:197px;top:364px;width:121px;height:1px;background:#909090"></div>
<div style="left:317px;top:361px;width:1px;height:4px;background:#f4f4f4"></div>
<div style="left:197px;top:365px;width:121px;height:1px;background:#2a2a2a"></div>
<div style="left:263px;top:358px;width:6px;height:11px;background:#9000a8;border-left:1px solid #c040d8;border-top:1px solid #c040d8;border-right:1px solid #580068;border-bottom:1px solid #580068;box-sizing:border-box"></div>
<div style="left:325px;top:355px;width:48px;height:18px;border-left:1px solid #989898;border-top:1px solid #909090;border-right:1px solid #f4f4f4;border-bottom:1px solid #f4f4f4;box-sizing:border-box"></div>
<div style="left:326px;top:356px;width:46px;height:16px;border-left:1px solid #2c2c2c;border-top:1px solid #383838;border-right:1px solid #2c2c2c;border-bottom:1px solid #2c2c2c;box-sizing:border-box"></div>
<div class="t s" style="left:329px;top:355.8px;height:14px;line-height:14px;font-size:10px;color:#e0e0e0;letter-spacing:-0.4px;font-weight:normal;">10 dB</div>
<div style="left:372px;top:355px;width:15px;height:8px;background:#f2f2f2;border-left:1px solid #ffffff;border-top:1px solid #ffffff;border-right:1px solid #a0a0a0;border-bottom:1px solid #a0a0a0;box-sizing:border-box"></div>
<div style="left:372px;top:364px;width:15px;height:9px;background:#f2f2f2;border-left:1px solid #ffffff;border-top:1px solid #ffffff;border-right:1px solid #a0a0a0;border-bottom:1px solid #a0a0a0;box-sizing:border-box"></div>
<div style="left:372px;top:363px;width:15px;height:1px;background:#6a6a6a"></div>
<div style="left:379px;top:358px;width:1px;height:1px;background:#000"></div>
<div style="left:378px;top:359px;width:3px;height:1px;background:#000"></div>
<div style="left:378px;top:368px;width:3px;height:1px;background:#000"></div>
<div style="left:379px;top:369px;width:1px;height:1px;background:#000"></div>
<div class="t s" style="left:191px;top:374.3px;height:14px;line-height:14px;font-size:10px;color:#b4eca8;letter-spacing:-0.68px;font-weight:normal;">AGC Drive</div>
<div style="left:191px;top:396px;width:133px;height:18px;border-left:1px solid #989898;border-top:1px solid #909090;border-right:1px solid #f4f4f4;border-bottom:1px solid #f4f4f4;box-sizing:border-box"></div>
<div style="left:192px;top:397px;width:131px;height:16px;border-left:1px solid #2c2c2c;border-top:1px solid #383838;border-right:1px solid #2c2c2c;border-bottom:1px solid #2c2c2c;box-sizing:border-box"></div>
<div style="left:195px;top:402px;width:1px;height:4px;background:#2e2e2e"></div>
<div style="left:197px;top:402px;width:121px;height:1px;background:#9a9a9a"></div>
<div style="left:197px;top:403px;width:121px;height:1px;background:#b0b0b0"></div>
<div style="left:197px;top:404px;width:121px;height:1px;background:#f8f8f8"></div>
<div style="left:197px;top:405px;width:121px;height:1px;background:#909090"></div>
<div style="left:317px;top:402px;width:1px;height:4px;background:#f4f4f4"></div>
<div style="left:197px;top:406px;width:121px;height:1px;background:#2a2a2a"></div>
<div style="left:197px;top:399px;width:6px;height:11px;background:#9000a8;border-left:1px solid #c040d8;border-top:1px solid #c040d8;border-right:1px solid #580068;border-bottom:1px solid #580068;box-sizing:border-box"></div>
<div style="left:325px;top:396px;width:48px;height:18px;border-left:1px solid #989898;border-top:1px solid #909090;border-right:1px solid #f4f4f4;border-bottom:1px solid #f4f4f4;box-sizing:border-box"></div>
<div style="left:326px;top:397px;width:46px;height:16px;border-left:1px solid #2c2c2c;border-top:1px solid #383838;border-right:1px solid #2c2c2c;border-bottom:1px solid #2c2c2c;box-sizing:border-box"></div>
<div class="t s" style="left:327px;top:396.8px;height:14px;line-height:14px;font-size:10px;color:#e0e0e0;letter-spacing:-0.4px;font-weight:normal;">Linear</div>
<div style="left:372px;top:396px;width:15px;height:8px;background:#f2f2f2;border-left:1px solid #ffffff;border-top:1px solid #ffffff;border-right:1px solid #a0a0a0;border-bottom:1px solid #a0a0a0;box-sizing:border-box"></div>
<div style="left:372px;top:405px;width:15px;height:9px;background:#f2f2f2;border-left:1px solid #ffffff;border-top:1px solid #ffffff;border-right:1px solid #a0a0a0;border-bottom:1px solid #a0a0a0;box-sizing:border-box"></div>
<div style="left:372px;top:404px;width:15px;height:1px;background:#6a6a6a"></div>
<div style="left:379px;top:399px;width:1px;height:1px;background:#000"></div>
<div style="left:378px;top:400px;width:3px;height:1px;background:#000"></div>
<div style="left:378px;top:409px;width:3px;height:1px;background:#000"></div>
<div style="left:379px;top:410px;width:1px;height:1px;background:#000"></div>
<div class="t s" style="left:191px;top:415.3px;height:14px;line-height:14px;font-size:10px;color:#d8d8d8;letter-spacing:-0.68px;font-weight:normal;">AGC Crossover</div>
<div style="left:191px;top:437px;width:133px;height:18px;border-left:1px solid #989898;border-top:1px solid #909090;border-right:1px solid #f4f4f4;border-bottom:1px solid #f4f4f4;box-sizing:border-box"></div>
<div style="left:192px;top:438px;width:131px;height:16px;border-left:1px solid #2c2c2c;border-top:1px solid #383838;border-right:1px solid #2c2c2c;border-bottom:1px solid #2c2c2c;box-sizing:border-box"></div>
<div style="left:195px;top:443px;width:1px;height:4px;background:#2e2e2e"></div>
<div style="left:197px;top:443px;width:121px;height:1px;background:#9a9a9a"></div>
<div style="left:197px;top:444px;width:121px;height:1px;background:#b0b0b0"></div>
<div style="left:197px;top:445px;width:121px;height:1px;background:#f8f8f8"></div>
<div style="left:197px;top:446px;width:121px;height:1px;background:#909090"></div>
<div style="left:317px;top:443px;width:1px;height:4px;background:#f4f4f4"></div>
<div style="left:197px;top:447px;width:121px;height:1px;background:#2a2a2a"></div>
<div style="left:217px;top:440px;width:6px;height:11px;background:#9000a8;border-left:1px solid #c040d8;border-top:1px solid #c040d8;border-right:1px solid #580068;border-bottom:1px solid #580068;box-sizing:border-box"></div>
<div style="left:325px;top:437px;width:48px;height:18px;border-left:1px solid #989898;border-top:1px solid #909090;border-right:1px solid #f4f4f4;border-bottom:1px solid #f4f4f4;box-sizing:border-box"></div>
<div style="left:326px;top:438px;width:46px;height:16px;border-left:1px solid #2c2c2c;border-top:1px solid #383838;border-right:1px solid #2c2c2c;border-bottom:1px solid #2c2c2c;box-sizing:border-box"></div>
<div class="t s" style="left:331px;top:437.8px;height:14px;line-height:14px;font-size:10px;color:#e0e0e0;letter-spacing:-0.4px;font-weight:normal;">1.2 s</div>
<div style="left:372px;top:437px;width:15px;height:8px;background:#f2f2f2;border-left:1px solid #ffffff;border-top:1px solid #ffffff;border-right:1px solid #a0a0a0;border-bottom:1px solid #a0a0a0;box-sizing:border-box"></div>
<div style="left:372px;top:446px;width:15px;height:9px;background:#f2f2f2;border-left:1px solid #ffffff;border-top:1px solid #ffffff;border-right:1px solid #a0a0a0;border-bottom:1px solid #a0a0a0;box-sizing:border-box"></div>
<div style="left:372px;top:445px;width:15px;height:1px;background:#6a6a6a"></div>
<div style="left:379px;top:440px;width:1px;height:1px;background:#000"></div>
<div style="left:378px;top:441px;width:3px;height:1px;background:#000"></div>
<div style="left:378px;top:450px;width:3px;height:1px;background:#000"></div>
<div style="left:379px;top:451px;width:1px;height:1px;background:#000"></div>
<div class="t s" style="left:191px;top:456.3px;height:14px;line-height:14px;font-size:10px;color:#d8d8d8;letter-spacing:-0.68px;font-weight:normal;">AGC Master Attack</div>
<div style="left:191px;top:478px;width:133px;height:18px;border-left:1px solid #989898;border-top:1px solid #909090;border-right:1px solid #f4f4f4;border-bottom:1px solid #f4f4f4;box-sizing:border-box"></div>
<div style="left:192px;top:479px;width:131px;height:16px;border-left:1px solid #2c2c2c;border-top:1px solid #383838;border-right:1px solid #2c2c2c;border-bottom:1px solid #2c2c2c;box-sizing:border-box"></div>
<div style="left:195px;top:484px;width:1px;height:4px;background:#2e2e2e"></div>
<div style="left:197px;top:484px;width:121px;height:1px;background:#9a9a9a"></div>
<div style="left:197px;top:485px;width:121px;height:1px;background:#b0b0b0"></div>
<div style="left:197px;top:486px;width:121px;height:1px;background:#f8f8f8"></div>
<div style="left:197px;top:487px;width:121px;height:1px;background:#909090"></div>
<div style="left:317px;top:484px;width:1px;height:4px;background:#f4f4f4"></div>
<div style="left:197px;top:488px;width:121px;height:1px;background:#2a2a2a"></div>
<div style="left:266px;top:481px;width:6px;height:11px;background:#9000a8;border-left:1px solid #c040d8;border-top:1px solid #c040d8;border-right:1px solid #580068;border-bottom:1px solid #580068;box-sizing:border-box"></div>
<div style="left:325px;top:478px;width:48px;height:18px;border-left:1px solid #989898;border-top:1px solid #909090;border-right:1px solid #f4f4f4;border-bottom:1px solid #f4f4f4;box-sizing:border-box"></div>
<div style="left:326px;top:479px;width:46px;height:16px;border-left:1px solid #2c2c2c;border-top:1px solid #383838;border-right:1px solid #2c2c2c;border-bottom:1px solid #2c2c2c;box-sizing:border-box"></div>
<div class="t s" style="left:330px;top:478.8px;height:14px;line-height:14px;font-size:10px;color:#e0e0e0;letter-spacing:-0.4px;font-weight:normal;">6.4 s</div>
<div style="left:372px;top:478px;width:15px;height:8px;background:#f2f2f2;border-left:1px solid #ffffff;border-top:1px solid #ffffff;border-right:1px solid #a0a0a0;border-bottom:1px solid #a0a0a0;box-sizing:border-box"></div>
<div style="left:372px;top:487px;width:15px;height:9px;background:#f2f2f2;border-left:1px solid #ffffff;border-top:1px solid #ffffff;border-right:1px solid #a0a0a0;border-bottom:1px solid #a0a0a0;box-sizing:border-box"></div>
<div style="left:372px;top:486px;width:15px;height:1px;background:#6a6a6a"></div>
<div style="left:379px;top:481px;width:1px;height:1px;background:#000"></div>
<div style="left:378px;top:482px;width:3px;height:1px;background:#000"></div>
<div style="left:378px;top:491px;width:3px;height:1px;background:#000"></div>
<div style="left:379px;top:492px;width:1px;height:1px;background:#000"></div>
<div class="t s" style="left:191px;top:497.3px;height:14px;line-height:14px;font-size:10px;color:#d8d8d8;letter-spacing:-0.68px;font-weight:normal;">AGC Bass Attack</div>
<div style="left:191px;top:519px;width:133px;height:18px;border-left:1px solid #989898;border-top:1px solid #909090;border-right:1px solid #f4f4f4;border-bottom:1px solid #f4f4f4;box-sizing:border-box"></div>
<div style="left:192px;top:520px;width:131px;height:16px;border-left:1px solid #2c2c2c;border-top:1px solid #383838;border-right:1px solid #2c2c2c;border-bottom:1px solid #2c2c2c;box-sizing:border-box"></div>
<div style="left:195px;top:525px;width:1px;height:4px;background:#2e2e2e"></div>
<div style="left:197px;top:525px;width:121px;height:1px;background:#9a9a9a"></div>
<div style="left:197px;top:526px;width:121px;height:1px;background:#b0b0b0"></div>
<div style="left:197px;top:527px;width:121px;height:1px;background:#f8f8f8"></div>
<div style="left:197px;top:528px;width:121px;height:1px;background:#909090"></div>
<div style="left:317px;top:525px;width:1px;height:4px;background:#f4f4f4"></div>
<div style="left:197px;top:529px;width:121px;height:1px;background:#2a2a2a"></div>
<div style="left:219px;top:522px;width:6px;height:11px;background:#9000a8;border-left:1px solid #c040d8;border-top:1px solid #c040d8;border-right:1px solid #580068;border-bottom:1px solid #580068;box-sizing:border-box"></div>
<div style="left:325px;top:519px;width:48px;height:18px;border-left:1px solid #989898;border-top:1px solid #909090;border-right:1px solid #f4f4f4;border-bottom:1px solid #f4f4f4;box-sizing:border-box"></div>
<div style="left:326px;top:520px;width:46px;height:16px;border-left:1px solid #2c2c2c;border-top:1px solid #383838;border-right:1px solid #2c2c2c;border-bottom:1px solid #2c2c2c;box-sizing:border-box"></div>
<div class="t s" style="left:330.5px;top:519.8px;height:14px;line-height:14px;font-size:10px;color:#e0e0e0;letter-spacing:-0.4px;font-weight:normal;">3.0 dB/s</div>
<div style="left:372px;top:519px;width:15px;height:8px;background:#f2f2f2;border-left:1px solid #ffffff;border-top:1px solid #ffffff;border-right:1px solid #a0a0a0;border-bottom:1px solid #a0a0a0;box-sizing:border-box"></div>
<div style="left:372px;top:528px;width:15px;height:9px;background:#f2f2f2;border-left:1px solid #ffffff;border-top:1px solid #ffffff;border-right:1px solid #a0a0a0;border-bottom:1px solid #a0a0a0;box-sizing:border-box"></div>
<div style="left:372px;top:527px;width:15px;height:1px;background:#6a6a6a"></div>
<div style="left:379px;top:522px;width:1px;height:1px;background:#000"></div>
<div style="left:378px;top:523px;width:3px;height:1px;background:#000"></div>
<div style="left:378px;top:532px;width:3px;height:1px;background:#000"></div>
<div style="left:379px;top:533px;width:1px;height:1px;background:#000"></div>
<div class="t s" style="left:193px;top:538.3px;height:14px;line-height:14px;font-size:10px;color:#d8d8d8;letter-spacing:-0.68px;font-weight:normal;">AGC Release</div>
<div style="left:191px;top:560px;width:133px;height:18px;border-left:1px solid #989898;border-top:1px solid #909090;border-right:1px solid #f4f4f4;border-bottom:1px solid #f4f4f4;box-sizing:border-box"></div>
<div style="left:192px;top:561px;width:131px;height:16px;border-left:1px solid #2c2c2c;border-top:1px solid #383838;border-right:1px solid #2c2c2c;border-bottom:1px solid #2c2c2c;box-sizing:border-box"></div>
<div style="left:195px;top:566px;width:1px;height:4px;background:#2e2e2e"></div>
<div style="left:197px;top:566px;width:121px;height:1px;background:#9a9a9a"></div>
<div style="left:197px;top:567px;width:121px;height:1px;background:#b0b0b0"></div>
<div style="left:197px;top:568px;width:121px;height:1px;background:#f8f8f8"></div>
<div style="left:197px;top:569px;width:121px;height:1px;background:#909090"></div>
<div style="left:317px;top:566px;width:1px;height:4px;background:#f4f4f4"></div>
<div style="left:197px;top:570px;width:121px;height:1px;background:#2a2a2a"></div>
<div style="left:266px;top:563px;width:6px;height:11px;background:#9000a8;border-left:1px solid #c040d8;border-top:1px solid #c040d8;border-right:1px solid #580068;border-bottom:1px solid #580068;box-sizing:border-box"></div>
<div style="left:325px;top:560px;width:48px;height:18px;border-left:1px solid #989898;border-top:1px solid #909090;border-right:1px solid #f4f4f4;border-bottom:1px solid #f4f4f4;box-sizing:border-box"></div>
<div style="left:326px;top:561px;width:46px;height:16px;border-left:1px solid #2c2c2c;border-top:1px solid #383838;border-right:1px solid #2c2c2c;border-bottom:1px solid #2c2c2c;box-sizing:border-box"></div>
<div class="t s" style="left:330px;top:560.8px;height:14px;line-height:14px;font-size:10px;color:#e0e0e0;letter-spacing:-0.4px;font-weight:normal;">6.4 s</div>
<div style="left:372px;top:560px;width:15px;height:8px;background:#f2f2f2;border-left:1px solid #ffffff;border-top:1px solid #ffffff;border-right:1px solid #a0a0a0;border-bottom:1px solid #a0a0a0;box-sizing:border-box"></div>
<div style="left:372px;top:569px;width:15px;height:9px;background:#f2f2f2;border-left:1px solid #ffffff;border-top:1px solid #ffffff;border-right:1px solid #a0a0a0;border-bottom:1px solid #a0a0a0;box-sizing:border-box"></div>
<div style="left:372px;top:568px;width:15px;height:1px;background:#6a6a6a"></div>
<div style="left:379px;top:563px;width:1px;height:1px;background:#000"></div>
<div style="left:378px;top:564px;width:3px;height:1px;background:#000"></div>
<div style="left:378px;top:573px;width:3px;height:1px;background:#000"></div>
<div style="left:379px;top:574px;width:1px;height:1px;background:#000"></div>
<div class="t s" style="left:191px;top:579.3px;height:14px;line-height:14px;font-size:10px;color:#d8d8d8;letter-spacing:-0.68px;font-weight:normal;">AGC Bass Release</div>
<div style="left:191px;top:600px;width:133px;height:18px;border-left:1px solid #989898;border-top:1px solid #909090;border-right:1px solid #f4f4f4;border-bottom:1px solid #f4f4f4;box-sizing:border-box"></div>
<div style="left:192px;top:601px;width:131px;height:16px;border-left:1px solid #2c2c2c;border-top:1px solid #383838;border-right:1px solid #2c2c2c;border-bottom:1px solid #2c2c2c;box-sizing:border-box"></div>
<div style="left:195px;top:606px;width:1px;height:4px;background:#2e2e2e"></div>
<div style="left:197px;top:606px;width:121px;height:1px;background:#9a9a9a"></div>
<div style="left:197px;top:607px;width:121px;height:1px;background:#b0b0b0"></div>
<div style="left:197px;top:608px;width:121px;height:1px;background:#f8f8f8"></div>
<div style="left:197px;top:609px;width:121px;height:1px;background:#909090"></div>
<div style="left:317px;top:606px;width:1px;height:4px;background:#f4f4f4"></div>
<div style="left:197px;top:610px;width:121px;height:1px;background:#2a2a2a"></div>
<div style="left:292px;top:603px;width:6px;height:11px;background:#9000a8;border-left:1px solid #c040d8;border-top:1px solid #c040d8;border-right:1px solid #580068;border-bottom:1px solid #580068;box-sizing:border-box"></div>
<div style="left:325px;top:600px;width:48px;height:18px;border-left:1px solid #989898;border-top:1px solid #909090;border-right:1px solid #f4f4f4;border-bottom:1px solid #f4f4f4;box-sizing:border-box"></div>
<div style="left:326px;top:601px;width:46px;height:16px;border-left:1px solid #2c2c2c;border-top:1px solid #383838;border-right:1px solid #2c2c2c;border-bottom:1px solid #2c2c2c;box-sizing:border-box"></div>
<div class="t s" style="left:330px;top:600.8px;height:14px;line-height:14px;font-size:10px;color:#e0e0e0;letter-spacing:-0.4px;font-weight:normal;">0.0 dB</div>
<div style="left:372px;top:600px;width:15px;height:8px;background:#f2f2f2;border-left:1px solid #ffffff;border-top:1px solid #ffffff;border-right:1px solid #a0a0a0;border-bottom:1px solid #a0a0a0;box-sizing:border-box"></div>
<div style="left:372px;top:609px;width:15px;height:9px;background:#f2f2f2;border-left:1px solid #ffffff;border-top:1px solid #ffffff;border-right:1px solid #a0a0a0;border-bottom:1px solid #a0a0a0;box-sizing:border-box"></div>
<div style="left:372px;top:608px;width:15px;height:1px;background:#6a6a6a"></div>
<div style="left:379px;top:603px;width:1px;height:1px;background:#000"></div>
<div style="left:378px;top:604px;width:3px;height:1px;background:#000"></div>
<div style="left:378px;top:613px;width:3px;height:1px;background:#000"></div>
<div style="left:379px;top:614px;width:1px;height:1px;background:#000"></div>
<div class="t s" style="left:191px;top:619.3px;height:14px;line-height:14px;font-size:10px;color:#d8d8d8;letter-spacing:-0.68px;font-weight:normal;">AGC Bass Threshold</div>
<div style="left:404px;top:314px;width:132px;height:18px;border-left:1px solid #989898;border-top:1px solid #909090;border-right:1px solid #f4f4f4;border-bottom:1px solid #f4f4f4;box-sizing:border-box"></div>
<div style="left:405px;top:315px;width:130px;height:16px;border-left:1px solid #2c2c2c;border-top:1px solid #383838;border-right:1px solid #2c2c2c;border-bottom:1px solid #2c2c2c;box-sizing:border-box"></div>
<div style="left:408px;top:320px;width:1px;height:4px;background:#2e2e2e"></div>
<div style="left:410px;top:320px;width:121px;height:1px;background:#9a9a9a"></div>
<div style="left:410px;top:321px;width:121px;height:1px;background:#b0b0b0"></div>
<div style="left:410px;top:322px;width:121px;height:1px;background:#f8f8f8"></div>
<div style="left:410px;top:323px;width:121px;height:1px;background:#909090"></div>
<div style="left:530px;top:320px;width:1px;height:4px;background:#f4f4f4"></div>
<div style="left:410px;top:324px;width:121px;height:1px;background:#2a2a2a"></div>
<div style="left:467px;top:316px;width:6px;height:11px;background:#9000a8;border-left:1px solid #c040d8;border-top:1px solid #c040d8;border-right:1px solid #580068;border-bottom:1px solid #580068;box-sizing:border-box"></div>
<div style="left:537px;top:314px;width:48px;height:18px;border-left:1px solid #989898;border-top:1px solid #909090;border-right:1px solid #f4f4f4;border-bottom:1px solid #f4f4f4;box-sizing:border-box"></div>
<div style="left:538px;top:315px;width:46px;height:16px;border-left:1px solid #2c2c2c;border-top:1px solid #383838;border-right:1px solid #2c2c2c;border-bottom:1px solid #2c2c2c;box-sizing:border-box"></div>
<div class="t s" style="left:542.5px;top:314.8px;height:14px;line-height:14px;font-size:10px;color:#e0e0e0;letter-spacing:-0.4px;font-weight:normal;">0.0 dB</div>
<div style="left:584px;top:314px;width:15px;height:8px;background:#f2f2f2;border-left:1px solid #ffffff;border-top:1px solid #ffffff;border-right:1px solid #a0a0a0;border-bottom:1px solid #a0a0a0;box-sizing:border-box"></div>
<div style="left:584px;top:323px;width:15px;height:9px;background:#f2f2f2;border-left:1px solid #ffffff;border-top:1px solid #ffffff;border-right:1px solid #a0a0a0;border-bottom:1px solid #a0a0a0;box-sizing:border-box"></div>
<div style="left:584px;top:322px;width:15px;height:1px;background:#6a6a6a"></div>
<div style="left:591px;top:317px;width:1px;height:1px;background:#000"></div>
<div style="left:590px;top:318px;width:3px;height:1px;background:#000"></div>
<div style="left:590px;top:327px;width:3px;height:1px;background:#000"></div>
<div style="left:591px;top:328px;width:1px;height:1px;background:#000"></div>
<div class="t s" style="left:404px;top:333.3px;height:14px;line-height:14px;font-size:10px;color:#d8d8d8;letter-spacing:-0.68px;font-weight:normal;">AGC Master Delta Threshold</div>
<div style="left:404px;top:355px;width:132px;height:18px;border-left:1px solid #989898;border-top:1px solid #909090;border-right:1px solid #f4f4f4;border-bottom:1px solid #f4f4f4;box-sizing:border-box"></div>
<div style="left:405px;top:356px;width:130px;height:16px;border-left:1px solid #2c2c2c;border-top:1px solid #383838;border-right:1px solid #2c2c2c;border-bottom:1px solid #2c2c2c;box-sizing:border-box"></div>
<div style="left:408px;top:361px;width:1px;height:4px;background:#2e2e2e"></div>
<div style="left:410px;top:361px;width:121px;height:1px;background:#9a9a9a"></div>
<div style="left:410px;top:362px;width:121px;height:1px;background:#b0b0b0"></div>
<div style="left:410px;top:363px;width:121px;height:1px;background:#f8f8f8"></div>
<div style="left:410px;top:364px;width:121px;height:1px;background:#909090"></div>
<div style="left:530px;top:361px;width:1px;height:4px;background:#f4f4f4"></div>
<div style="left:410px;top:365px;width:121px;height:1px;background:#2a2a2a"></div>
<div style="left:467px;top:357px;width:6px;height:11px;background:#9000a8;border-left:1px solid #c040d8;border-top:1px solid #c040d8;border-right:1px solid #580068;border-bottom:1px solid #580068;box-sizing:border-box"></div>
<div style="left:537px;top:355px;width:48px;height:18px;border-left:1px solid #989898;border-top:1px solid #909090;border-right:1px solid #f4f4f4;border-bottom:1px solid #f4f4f4;box-sizing:border-box"></div>
<div style="left:538px;top:356px;width:46px;height:16px;border-left:1px solid #2c2c2c;border-top:1px solid #383838;border-right:1px solid #2c2c2c;border-bottom:1px solid #2c2c2c;box-sizing:border-box"></div>
<div class="t s" style="left:542.5px;top:355.8px;height:14px;line-height:14px;font-size:10px;color:#e0e0e0;letter-spacing:-0.4px;font-weight:normal;">0.0 dB</div>
<div style="left:584px;top:355px;width:15px;height:8px;background:#f2f2f2;border-left:1px solid #ffffff;border-top:1px solid #ffffff;border-right:1px solid #a0a0a0;border-bottom:1px solid #a0a0a0;box-sizing:border-box"></div>
<div style="left:584px;top:364px;width:15px;height:9px;background:#f2f2f2;border-left:1px solid #ffffff;border-top:1px solid #ffffff;border-right:1px solid #a0a0a0;border-bottom:1px solid #a0a0a0;box-sizing:border-box"></div>
<div style="left:584px;top:363px;width:15px;height:1px;background:#6a6a6a"></div>
<div style="left:591px;top:358px;width:1px;height:1px;background:#000"></div>
<div style="left:590px;top:359px;width:3px;height:1px;background:#000"></div>
<div style="left:590px;top:368px;width:3px;height:1px;background:#000"></div>
<div style="left:591px;top:369px;width:1px;height:1px;background:#000"></div>
<div class="t s" style="left:404px;top:374.3px;height:14px;line-height:14px;font-size:10px;color:#d8d8d8;letter-spacing:-0.68px;font-weight:normal;">AGC Bass Delta Threshold</div>
<div style="left:404px;top:396px;width:132px;height:18px;border-left:1px solid #989898;border-top:1px solid #909090;border-right:1px solid #f4f4f4;border-bottom:1px solid #f4f4f4;box-sizing:border-box"></div>
<div style="left:405px;top:397px;width:130px;height:16px;border-left:1px solid #2c2c2c;border-top:1px solid #383838;border-right:1px solid #2c2c2c;border-bottom:1px solid #2c2c2c;box-sizing:border-box"></div>
<div style="left:408px;top:402px;width:1px;height:4px;background:#2e2e2e"></div>
<div style="left:410px;top:402px;width:121px;height:1px;background:#9a9a9a"></div>
<div style="left:410px;top:403px;width:121px;height:1px;background:#b0b0b0"></div>
<div style="left:410px;top:404px;width:121px;height:1px;background:#f8f8f8"></div>
<div style="left:410px;top:405px;width:121px;height:1px;background:#909090"></div>
<div style="left:530px;top:402px;width:1px;height:4px;background:#f4f4f4"></div>
<div style="left:410px;top:406px;width:121px;height:1px;background:#2a2a2a"></div>
<div style="left:410px;top:398px;width:6px;height:11px;background:#9000a8;border-left:1px solid #c040d8;border-top:1px solid #c040d8;border-right:1px solid #580068;border-bottom:1px solid #580068;box-sizing:border-box"></div>
<div style="left:537px;top:396px;width:48px;height:18px;border-left:1px solid #989898;border-top:1px solid #909090;border-right:1px solid #f4f4f4;border-bottom:1px solid #f4f4f4;box-sizing:border-box"></div>
<div style="left:538px;top:397px;width:46px;height:16px;border-left:1px solid #2c2c2c;border-top:1px solid #383838;border-right:1px solid #2c2c2c;border-bottom:1px solid #2c2c2c;box-sizing:border-box"></div>
<div class="t s" style="left:539.4px;top:396.8px;height:14px;line-height:14px;font-size:10px;color:#e0e0e0;letter-spacing:-0.4px;font-weight:normal;">inf : 1</div>
<div style="left:584px;top:396px;width:15px;height:8px;background:#f2f2f2;border-left:1px solid #ffffff;border-top:1px solid #ffffff;border-right:1px solid #a0a0a0;border-bottom:1px solid #a0a0a0;box-sizing:border-box"></div>
<div style="left:584px;top:405px;width:15px;height:9px;background:#f2f2f2;border-left:1px solid #ffffff;border-top:1px solid #ffffff;border-right:1px solid #a0a0a0;border-bottom:1px solid #a0a0a0;box-sizing:border-box"></div>
<div style="left:584px;top:404px;width:15px;height:1px;background:#6a6a6a"></div>
<div style="left:591px;top:399px;width:1px;height:1px;background:#000"></div>
<div style="left:590px;top:400px;width:3px;height:1px;background:#000"></div>
<div style="left:590px;top:409px;width:3px;height:1px;background:#000"></div>
<div style="left:591px;top:410px;width:1px;height:1px;background:#000"></div>
<div class="t s" style="left:404px;top:415.3px;height:14px;line-height:14px;font-size:10px;color:#d8d8d8;letter-spacing:-0.68px;font-weight:normal;">AGC Ratio</div>
<div style="left:404px;top:437px;width:132px;height:18px;border-left:1px solid #989898;border-top:1px solid #909090;border-right:1px solid #f4f4f4;border-bottom:1px solid #f4f4f4;box-sizing:border-box"></div>
<div style="left:405px;top:438px;width:130px;height:16px;border-left:1px solid #2c2c2c;border-top:1px solid #383838;border-right:1px solid #2c2c2c;border-bottom:1px solid #2c2c2c;box-sizing:border-box"></div>
<div style="left:408px;top:443px;width:1px;height:4px;background:#2e2e2e"></div>
<div style="left:410px;top:443px;width:121px;height:1px;background:#9a9a9a"></div>
<div style="left:410px;top:444px;width:121px;height:1px;background:#b0b0b0"></div>
<div style="left:410px;top:445px;width:121px;height:1px;background:#f8f8f8"></div>
<div style="left:410px;top:446px;width:121px;height:1px;background:#909090"></div>
<div style="left:530px;top:443px;width:1px;height:4px;background:#f4f4f4"></div>
<div style="left:410px;top:447px;width:121px;height:1px;background:#2a2a2a"></div>
<div style="left:467px;top:439px;width:6px;height:11px;background:#9000a8;border-left:1px solid #c040d8;border-top:1px solid #c040d8;border-right:1px solid #580068;border-bottom:1px solid #580068;box-sizing:border-box"></div>
<div style="left:537px;top:437px;width:48px;height:18px;border-left:1px solid #989898;border-top:1px solid #909090;border-right:1px solid #f4f4f4;border-bottom:1px solid #f4f4f4;box-sizing:border-box"></div>
<div style="left:538px;top:438px;width:46px;height:16px;border-left:1px solid #2c2c2c;border-top:1px solid #383838;border-right:1px solid #2c2c2c;border-bottom:1px solid #2c2c2c;box-sizing:border-box"></div>
<div class="t s" style="left:542.5px;top:437.8px;height:14px;line-height:14px;font-size:10px;color:#e0e0e0;letter-spacing:-0.4px;font-weight:normal;">0.0 dB</div>
<div style="left:584px;top:437px;width:15px;height:8px;background:#f2f2f2;border-left:1px solid #ffffff;border-top:1px solid #ffffff;border-right:1px solid #a0a0a0;border-bottom:1px solid #a0a0a0;box-sizing:border-box"></div>
<div style="left:584px;top:446px;width:15px;height:9px;background:#f2f2f2;border-left:1px solid #ffffff;border-top:1px solid #ffffff;border-right:1px solid #a0a0a0;border-bottom:1px solid #a0a0a0;box-sizing:border-box"></div>
<div style="left:584px;top:445px;width:15px;height:1px;background:#6a6a6a"></div>
<div style="left:591px;top:440px;width:1px;height:1px;background:#000"></div>
<div style="left:590px;top:441px;width:3px;height:1px;background:#000"></div>
<div style="left:590px;top:450px;width:3px;height:1px;background:#000"></div>
<div style="left:591px;top:451px;width:1px;height:1px;background:#000"></div>
<div class="t s" style="left:404px;top:456.3px;height:14px;line-height:14px;font-size:10px;color:#d8d8d8;letter-spacing:-0.68px;font-weight:normal;">AGC Idle Gain</div>
<div style="left:404px;top:478px;width:132px;height:18px;border-left:1px solid #989898;border-top:1px solid #909090;border-right:1px solid #f4f4f4;border-bottom:1px solid #f4f4f4;box-sizing:border-box"></div>
<div style="left:405px;top:479px;width:130px;height:16px;border-left:1px solid #2c2c2c;border-top:1px solid #383838;border-right:1px solid #2c2c2c;border-bottom:1px solid #2c2c2c;box-sizing:border-box"></div>
<div style="left:408px;top:484px;width:1px;height:4px;background:#2e2e2e"></div>
<div style="left:410px;top:484px;width:121px;height:1px;background:#9a9a9a"></div>
<div style="left:410px;top:485px;width:121px;height:1px;background:#b0b0b0"></div>
<div style="left:410px;top:486px;width:121px;height:1px;background:#f8f8f8"></div>
<div style="left:410px;top:487px;width:121px;height:1px;background:#909090"></div>
<div style="left:530px;top:484px;width:1px;height:4px;background:#f4f4f4"></div>
<div style="left:410px;top:488px;width:121px;height:1px;background:#2a2a2a"></div>
<div style="left:448px;top:480px;width:6px;height:11px;background:#9000a8;border-left:1px solid #c040d8;border-top:1px solid #c040d8;border-right:1px solid #580068;border-bottom:1px solid #580068;box-sizing:border-box"></div>
<div style="left:537px;top:478px;width:48px;height:18px;border-left:1px solid #989898;border-top:1px solid #909090;border-right:1px solid #f4f4f4;border-bottom:1px solid #f4f4f4;box-sizing:border-box"></div>
<div style="left:538px;top:479px;width:46px;height:16px;border-left:1px solid #2c2c2c;border-top:1px solid #383838;border-right:1px solid #2c2c2c;border-bottom:1px solid #2c2c2c;box-sizing:border-box"></div>
<div class="t s" style="left:539.3px;top:478.8px;height:14px;line-height:14px;font-size:10px;color:#e0e0e0;letter-spacing:-0.4px;font-weight:normal;">-35 dB</div>
<div style="left:584px;top:478px;width:15px;height:8px;background:#f2f2f2;border-left:1px solid #ffffff;border-top:1px solid #ffffff;border-right:1px solid #a0a0a0;border-bottom:1px solid #a0a0a0;box-sizing:border-box"></div>
<div style="left:584px;top:487px;width:15px;height:9px;background:#f2f2f2;border-left:1px solid #ffffff;border-top:1px solid #ffffff;border-right:1px solid #a0a0a0;border-bottom:1px solid #a0a0a0;box-sizing:border-box"></div>
<div style="left:584px;top:486px;width:15px;height:1px;background:#6a6a6a"></div>
<div style="left:591px;top:481px;width:1px;height:1px;background:#000"></div>
<div style="left:590px;top:482px;width:3px;height:1px;background:#000"></div>
<div style="left:590px;top:491px;width:3px;height:1px;background:#000"></div>
<div style="left:591px;top:492px;width:1px;height:1px;background:#000"></div>
<div class="t s" style="left:404px;top:497.3px;height:14px;line-height:14px;font-size:10px;color:#d8d8d8;letter-spacing:-0.68px;font-weight:normal;">AGC Gate Threshold</div>
<div style="left:404px;top:519px;width:132px;height:18px;border-left:1px solid #989898;border-top:1px solid #909090;border-right:1px solid #f4f4f4;border-bottom:1px solid #f4f4f4;box-sizing:border-box"></div>
<div style="left:405px;top:520px;width:130px;height:16px;border-left:1px solid #2c2c2c;border-top:1px solid #383838;border-right:1px solid #2c2c2c;border-bottom:1px solid #2c2c2c;box-sizing:border-box"></div>
<div style="left:408px;top:525px;width:1px;height:4px;background:#2e2e2e"></div>
<div style="left:410px;top:525px;width:121px;height:1px;background:#9a9a9a"></div>
<div style="left:410px;top:526px;width:121px;height:1px;background:#b0b0b0"></div>
<div style="left:410px;top:527px;width:121px;height:1px;background:#f8f8f8"></div>
<div style="left:410px;top:528px;width:121px;height:1px;background:#909090"></div>
<div style="left:530px;top:525px;width:1px;height:4px;background:#f4f4f4"></div>
<div style="left:410px;top:529px;width:121px;height:1px;background:#2a2a2a"></div>
<div style="left:511px;top:521px;width:6px;height:11px;background:#9000a8;border-left:1px solid #c040d8;border-top:1px solid #c040d8;border-right:1px solid #580068;border-bottom:1px solid #580068;box-sizing:border-box"></div>
<div style="left:537px;top:519px;width:48px;height:18px;border-left:1px solid #989898;border-top:1px solid #909090;border-right:1px solid #f4f4f4;border-bottom:1px solid #f4f4f4;box-sizing:border-box"></div>
<div style="left:538px;top:520px;width:46px;height:16px;border-left:1px solid #2c2c2c;border-top:1px solid #383838;border-right:1px solid #2c2c2c;border-bottom:1px solid #2c2c2c;box-sizing:border-box"></div>
<div class="t s" style="left:539.3px;top:519.8px;height:14px;line-height:14px;font-size:10px;color:#e0e0e0;letter-spacing:-0.4px;font-weight:normal;">-3.0 dB</div>
<div style="left:584px;top:519px;width:15px;height:8px;background:#f2f2f2;border-left:1px solid #ffffff;border-top:1px solid #ffffff;border-right:1px solid #a0a0a0;border-bottom:1px solid #a0a0a0;box-sizing:border-box"></div>
<div style="left:584px;top:528px;width:15px;height:9px;background:#f2f2f2;border-left:1px solid #ffffff;border-top:1px solid #ffffff;border-right:1px solid #a0a0a0;border-bottom:1px solid #a0a0a0;box-sizing:border-box"></div>
<div style="left:584px;top:527px;width:15px;height:1px;background:#6a6a6a"></div>
<div style="left:591px;top:522px;width:1px;height:1px;background:#000"></div>
<div style="left:590px;top:523px;width:3px;height:1px;background:#000"></div>
<div style="left:590px;top:532px;width:3px;height:1px;background:#000"></div>
<div style="left:591px;top:533px;width:1px;height:1px;background:#000"></div>
<div class="t s" style="left:404px;top:538.3px;height:14px;line-height:14px;font-size:10px;color:#d8d8d8;letter-spacing:-0.68px;font-weight:normal;">AGC Window Size</div>
<div style="left:404px;top:560px;width:132px;height:18px;border-left:1px solid #989898;border-top:1px solid #909090;border-right:1px solid #f4f4f4;border-bottom:1px solid #f4f4f4;box-sizing:border-box"></div>
<div style="left:405px;top:561px;width:130px;height:16px;border-left:1px solid #2c2c2c;border-top:1px solid #383838;border-right:1px solid #2c2c2c;border-bottom:1px solid #2c2c2c;box-sizing:border-box"></div>
<div style="left:408px;top:566px;width:1px;height:4px;background:#2e2e2e"></div>
<div style="left:410px;top:566px;width:121px;height:1px;background:#9a9a9a"></div>
<div style="left:410px;top:567px;width:121px;height:1px;background:#b0b0b0"></div>
<div style="left:410px;top:568px;width:121px;height:1px;background:#f8f8f8"></div>
<div style="left:410px;top:569px;width:121px;height:1px;background:#909090"></div>
<div style="left:530px;top:566px;width:1px;height:4px;background:#f4f4f4"></div>
<div style="left:410px;top:570px;width:121px;height:1px;background:#2a2a2a"></div>
<div style="left:410px;top:562px;width:6px;height:11px;background:#9000a8;border-left:1px solid #c040d8;border-top:1px solid #c040d8;border-right:1px solid #580068;border-bottom:1px solid #580068;box-sizing:border-box"></div>
<div style="left:537px;top:560px;width:48px;height:18px;border-left:1px solid #989898;border-top:1px solid #909090;border-right:1px solid #f4f4f4;border-bottom:1px solid #f4f4f4;box-sizing:border-box"></div>
<div style="left:538px;top:561px;width:46px;height:16px;border-left:1px solid #2c2c2c;border-top:1px solid #383838;border-right:1px solid #2c2c2c;border-bottom:1px solid #2c2c2c;box-sizing:border-box"></div>
<div class="t s" style="left:542.4px;top:560.8px;height:14px;line-height:14px;font-size:10px;color:#e0e0e0;letter-spacing:-0.4px;font-weight:normal;">0.5 dB/s</div>
<div style="left:584px;top:560px;width:15px;height:8px;background:#f2f2f2;border-left:1px solid #ffffff;border-top:1px solid #ffffff;border-right:1px solid #a0a0a0;border-bottom:1px solid #a0a0a0;box-sizing:border-box"></div>
<div style="left:584px;top:569px;width:15px;height:9px;background:#f2f2f2;border-left:1px solid #ffffff;border-top:1px solid #ffffff;border-right:1px solid #a0a0a0;border-bottom:1px solid #a0a0a0;box-sizing:border-box"></div>
<div style="left:584px;top:568px;width:15px;height:1px;background:#6a6a6a"></div>
<div style="left:591px;top:563px;width:1px;height:1px;background:#000"></div>
<div style="left:590px;top:564px;width:3px;height:1px;background:#000"></div>
<div style="left:590px;top:573px;width:3px;height:1px;background:#000"></div>
<div style="left:591px;top:574px;width:1px;height:1px;background:#000"></div>
<div class="t s" style="left:404px;top:579.3px;height:14px;line-height:14px;font-size:10px;color:#d8d8d8;letter-spacing:-0.68px;font-weight:normal;">AGC Window Release</div>
<div style="left:404px;top:600px;width:132px;height:18px;border-left:1px solid #989898;border-top:1px solid #909090;border-right:1px solid #f4f4f4;border-bottom:1px solid #f4f4f4;box-sizing:border-box"></div>
<div style="left:405px;top:601px;width:130px;height:16px;border-left:1px solid #2c2c2c;border-top:1px solid #383838;border-right:1px solid #2c2c2c;border-bottom:1px solid #2c2c2c;box-sizing:border-box"></div>
<div style="left:408px;top:606px;width:1px;height:4px;background:#2e2e2e"></div>
<div style="left:410px;top:606px;width:121px;height:1px;background:#9a9a9a"></div>
<div style="left:410px;top:607px;width:121px;height:1px;background:#b0b0b0"></div>
<div style="left:410px;top:608px;width:121px;height:1px;background:#f8f8f8"></div>
<div style="left:410px;top:609px;width:121px;height:1px;background:#909090"></div>
<div style="left:530px;top:606px;width:1px;height:4px;background:#f4f4f4"></div>
<div style="left:410px;top:610px;width:121px;height:1px;background:#2a2a2a"></div>
<div style="left:410px;top:602px;width:6px;height:11px;background:#9000a8;border-left:1px solid #c040d8;border-top:1px solid #c040d8;border-right:1px solid #580068;border-bottom:1px solid #580068;box-sizing:border-box"></div>
<div style="left:537px;top:600px;width:48px;height:18px;border-left:1px solid #989898;border-top:1px solid #909090;border-right:1px solid #f4f4f4;border-bottom:1px solid #f4f4f4;box-sizing:border-box"></div>
<div style="left:538px;top:601px;width:46px;height:16px;border-left:1px solid #2c2c2c;border-top:1px solid #383838;border-right:1px solid #2c2c2c;border-bottom:1px solid #2c2c2c;box-sizing:border-box"></div>
<div class="t s" style="left:539.3px;top:600.8px;height:14px;line-height:14px;font-size:10px;color:#e0e0e0;letter-spacing:-0.4px;font-weight:normal;">0 dB</div>
<div style="left:584px;top:600px;width:15px;height:8px;background:#f2f2f2;border-left:1px solid #ffffff;border-top:1px solid #ffffff;border-right:1px solid #a0a0a0;border-bottom:1px solid #a0a0a0;box-sizing:border-box"></div>
<div style="left:584px;top:609px;width:15px;height:9px;background:#f2f2f2;border-left:1px solid #ffffff;border-top:1px solid #ffffff;border-right:1px solid #a0a0a0;border-bottom:1px solid #a0a0a0;box-sizing:border-box"></div>
<div style="left:584px;top:608px;width:15px;height:1px;background:#6a6a6a"></div>
<div style="left:591px;top:603px;width:1px;height:1px;background:#000"></div>
<div style="left:590px;top:604px;width:3px;height:1px;background:#000"></div>
<div style="left:590px;top:613px;width:3px;height:1px;background:#000"></div>
<div style="left:591px;top:614px;width:1px;height:1px;background:#000"></div>
<div class="t s" style="left:404px;top:619.3px;height:14px;line-height:14px;font-size:10px;color:#d8d8d8;letter-spacing:-0.68px;font-weight:normal;">AGC Maximum Delta GR</div>
<div style="left:404px;top:641px;width:132px;height:18px;border-left:1px solid #989898;border-top:1px solid #909090;border-right:1px solid #f4f4f4;border-bottom:1px solid #f4f4f4;box-sizing:border-box"></div>
<div style="left:405px;top:642px;width:130px;height:16px;border-left:1px solid #2c2c2c;border-top:1px solid #383838;border-right:1px solid #2c2c2c;border-bottom:1px solid #2c2c2c;box-sizing:border-box"></div>
<div style="left:408px;top:647px;width:1px;height:4px;background:#2e2e2e"></div>
<div style="left:410px;top:647px;width:121px;height:1px;background:#9a9a9a"></div>
<div style="left:410px;top:648px;width:121px;height:1px;background:#b0b0b0"></div>
<div style="left:410px;top:649px;width:121px;height:1px;background:#f8f8f8"></div>
<div style="left:410px;top:650px;width:121px;height:1px;background:#909090"></div>
<div style="left:530px;top:647px;width:1px;height:4px;background:#f4f4f4"></div>
<div style="left:410px;top:651px;width:121px;height:1px;background:#2a2a2a"></div>
<div style="left:498px;top:643px;width:6px;height:11px;background:#9000a8;border-left:1px solid #c040d8;border-top:1px solid #c040d8;border-right:1px solid #580068;border-bottom:1px solid #580068;box-sizing:border-box"></div>
<div style="left:537px;top:641px;width:48px;height:18px;border-left:1px solid #989898;border-top:1px solid #909090;border-right:1px solid #f4f4f4;border-bottom:1px solid #f4f4f4;box-sizing:border-box"></div>
<div style="left:538px;top:642px;width:46px;height:16px;border-left:1px solid #2c2c2c;border-top:1px solid #383838;border-right:1px solid #2c2c2c;border-bottom:1px solid #2c2c2c;box-sizing:border-box"></div>
<div class="t s" style="left:539.3px;top:641.8px;height:14px;line-height:14px;font-size:10px;color:#e0e0e0;letter-spacing:-0.4px;font-weight:normal;">3 dB</div>
<div style="left:584px;top:641px;width:15px;height:8px;background:#f2f2f2;border-left:1px solid #ffffff;border-top:1px solid #ffffff;border-right:1px solid #a0a0a0;border-bottom:1px solid #a0a0a0;box-sizing:border-box"></div>
<div style="left:584px;top:650px;width:15px;height:9px;background:#f2f2f2;border-left:1px solid #ffffff;border-top:1px solid #ffffff;border-right:1px solid #a0a0a0;border-bottom:1px solid #a0a0a0;box-sizing:border-box"></div>
<div style="left:584px;top:649px;width:15px;height:1px;background:#6a6a6a"></div>
<div style="left:591px;top:644px;width:1px;height:1px;background:#000"></div>
<div style="left:590px;top:645px;width:3px;height:1px;background:#000"></div>
<div style="left:590px;top:654px;width:3px;height:1px;background:#000"></div>
<div style="left:591px;top:655px;width:1px;height:1px;background:#000"></div>
<div class="t s" style="left:404px;top:660.3px;height:14px;line-height:14px;font-size:10px;color:#d8d8d8;letter-spacing:-0.68px;font-weight:normal;">AGC Bass Couple</div>
<div style="left:404px;top:682px;width:132px;height:18px;border-left:1px solid #989898;border-top:1px solid #909090;border-right:1px solid #f4f4f4;border-bottom:1px solid #f4f4f4;box-sizing:border-box"></div>
<div style="left:405px;top:683px;width:130px;height:16px;border-left:1px solid #2c2c2c;border-top:1px solid #383838;border-right:1px solid #2c2c2c;border-bottom:1px solid #2c2c2c;box-sizing:border-box"></div>
<div style="left:408px;top:688px;width:1px;height:4px;background:#2e2e2e"></div>
<div style="left:410px;top:688px;width:121px;height:1px;background:#9a9a9a"></div>
<div style="left:410px;top:689px;width:121px;height:1px;background:#b0b0b0"></div>
<div style="left:410px;top:690px;width:121px;height:1px;background:#f8f8f8"></div>
<div style="left:410px;top:691px;width:121px;height:1px;background:#909090"></div>
<div style="left:530px;top:688px;width:1px;height:4px;background:#f4f4f4"></div>
<div style="left:410px;top:692px;width:121px;height:1px;background:#2a2a2a"></div>
<div style="left:410px;top:684px;width:6px;height:11px;background:#9000a8;border-left:1px solid #c040d8;border-top:1px solid #c040d8;border-right:1px solid #580068;border-bottom:1px solid #580068;box-sizing:border-box"></div>
<div style="left:537px;top:682px;width:48px;height:18px;border-left:1px solid #989898;border-top:1px solid #909090;border-right:1px solid #f4f4f4;border-bottom:1px solid #f4f4f4;box-sizing:border-box"></div>
<div style="left:538px;top:683px;width:46px;height:16px;border-left:1px solid #2c2c2c;border-top:1px solid #383838;border-right:1px solid #2c2c2c;border-bottom:1px solid #2c2c2c;box-sizing:border-box"></div>
<div class="t s" style="left:539.3px;top:682.8px;height:14px;line-height:14px;font-size:10px;color:#e0e0e0;letter-spacing:-0.4px;font-weight:normal;">L/R</div>
<div style="left:584px;top:682px;width:15px;height:8px;background:#f2f2f2;border-left:1px solid #ffffff;border-top:1px solid #ffffff;border-right:1px solid #a0a0a0;border-bottom:1px solid #a0a0a0;box-sizing:border-box"></div>
<div style="left:584px;top:691px;width:15px;height:9px;background:#f2f2f2;border-left:1px solid #ffffff;border-top:1px solid #ffffff;border-right:1px solid #a0a0a0;border-bottom:1px solid #a0a0a0;box-sizing:border-box"></div>
<div style="left:584px;top:690px;width:15px;height:1px;background:#6a6a6a"></div>
<div style="left:591px;top:685px;width:1px;height:1px;background:#000"></div>
<div style="left:590px;top:686px;width:3px;height:1px;background:#000"></div>
<div style="left:590px;top:695px;width:3px;height:1px;background:#000"></div>
<div style="left:591px;top:696px;width:1px;height:1px;background:#000"></div>
<div class="t s" style="left:404px;top:701.3px;height:14px;line-height:14px;font-size:10px;color:#d8d8d8;letter-spacing:-0.68px;font-weight:normal;">AGC Matrix</div>
<div class="t s" style="left:3px;top:744.0px;height:14px;line-height:14px;font-size:11px;color:#101010;letter-spacing:-0.55px;font-weight:normal;">Place cursor over the active slider to use mousewheel</div>
<svg style="position:absolute;left:1010px;top:745px" width="13" height="13"><path d="M3.5 12 L12 3.5 M7.5 12 L12 7.5 M11 12 L12 11" stroke="#ffffff" stroke-width="1.3" transform="translate(0.8,0.8)"/><path d="M3.5 12 L12 3.5 M7.5 12 L12 7.5 M11 12 L12 11" stroke="#6a6a6a" stroke-width="1.3"/></svg>
<div style="left:0px;top:0px;width:1px;height:759px;background:#a0a0a0"></div>
<div style="left:1023px;top:0px;width:1px;height:759px;background:#a0a0a0"></div>
<div style="left:0px;top:0px;width:1024px;height:1px;background:#a0a0a0"></div>
<div style="left:0px;top:758px;width:1024px;height:1px;background:#a0a0a0"></div>
</body></html>
